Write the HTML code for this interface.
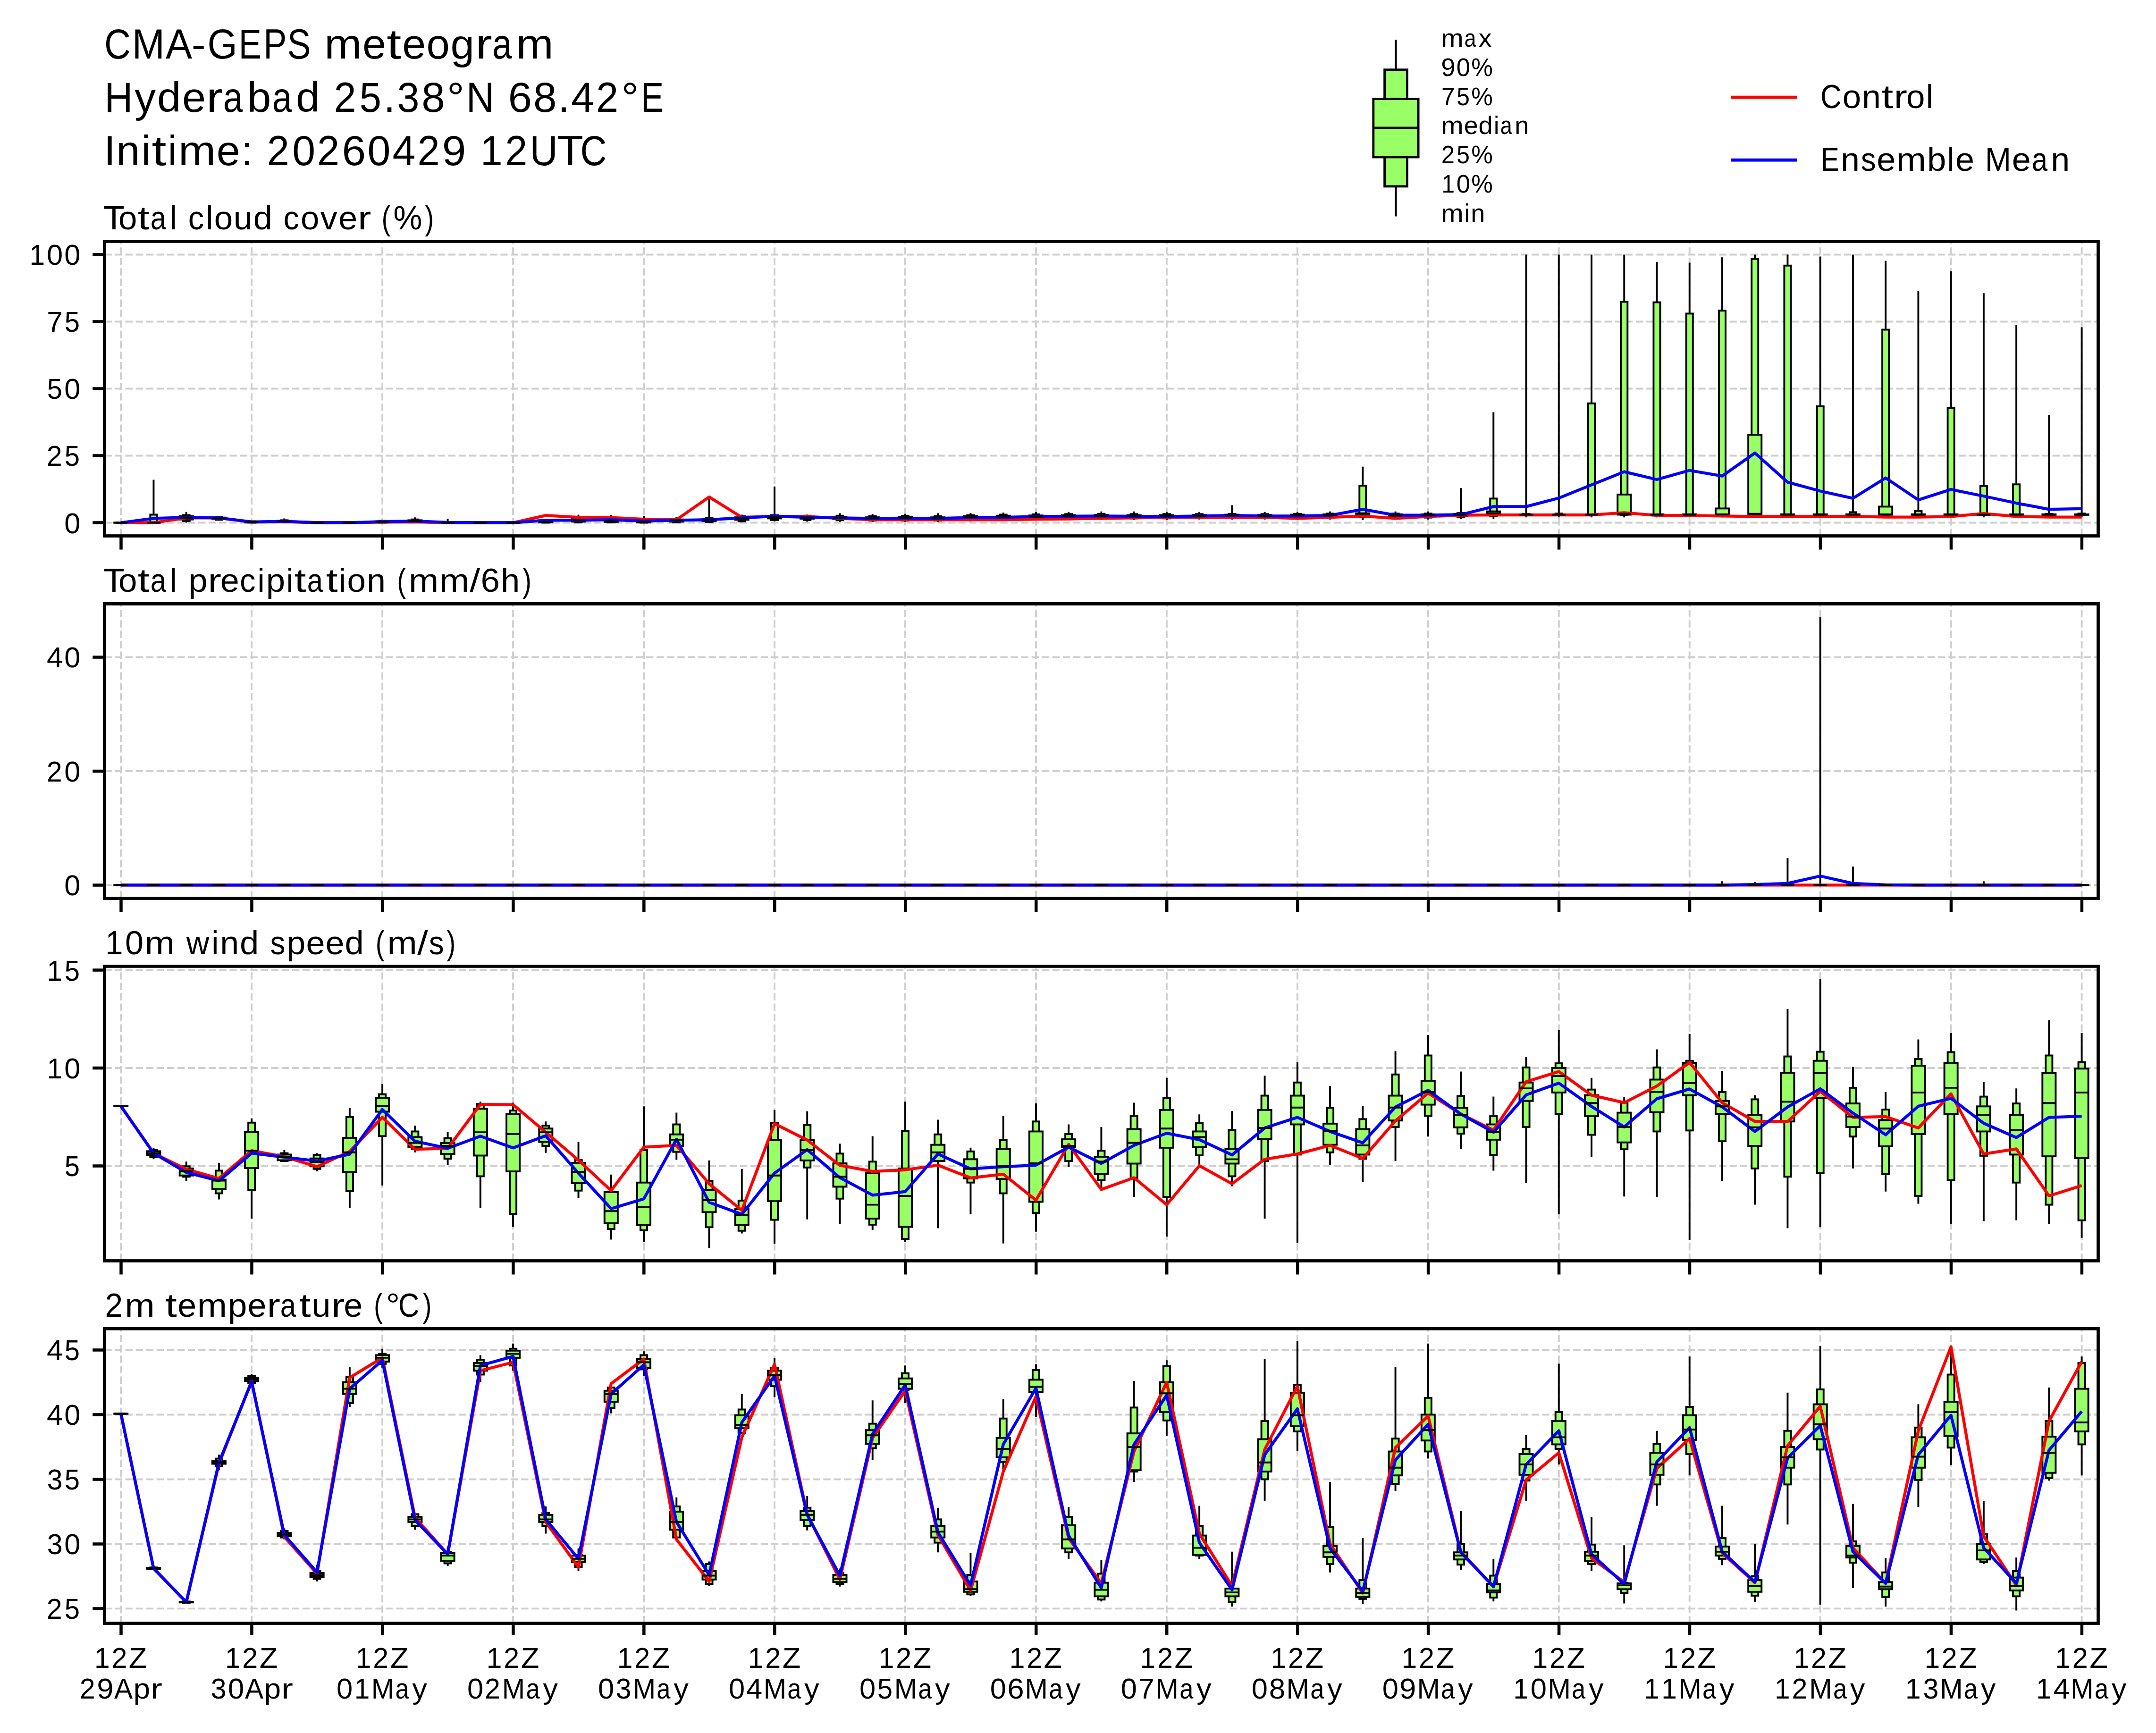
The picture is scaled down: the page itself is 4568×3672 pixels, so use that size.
<!DOCTYPE html>
<html><head><meta charset="utf-8"><title>CMA-GEPS meteogram</title>
<style>html,body{margin:0;padding:0;background:#fff;width:4568px;height:3672px;overflow:hidden}</style>
</head><body>
<svg width="4568" height="3672" viewBox="0 0 4568 3672" style="display:block">
<rect x="0" y="0" width="4568" height="3672" fill="#fff"/>
<g font-family='"Liberation Sans", sans-serif' style="font-kerning:none;font-variant-ligatures:none">
<clipPath id="c_cloud"><rect x="221.45" y="511.4" width="4224.05" height="624.1"/></clipPath>
<g clip-path="url(#c_cloud)"><path d="M256.20 1135.50V511.40M533.16 1135.50V511.40M810.12 1135.50V511.40M1087.08 1135.50V511.40M1364.04 1135.50V511.40M1641.00 1135.50V511.40M1917.96 1135.50V511.40M2194.92 1135.50V511.40M2471.88 1135.50V511.40M2748.84 1135.50V511.40M3025.80 1135.50V511.40M3302.76 1135.50V511.40M3579.72 1135.50V511.40M3856.68 1135.50V511.40M4133.64 1135.50V511.40M4410.60 1135.50V511.40M221.45 1107.50H4445.50M221.45 965.49H4445.50M221.45 823.47H4445.50M221.45 681.46H4445.50M221.45 539.45H4445.50" stroke="#cfcfcf" stroke-width="3.9" stroke-dasharray="15.41 6.66" fill="none"/><path d="M325.44 1107.50V1016.61M394.68 1107.50V1084.78M463.92 1101.82V1093.87M533.16 1107.50V1102.96M602.40 1107.50V1098.41M671.64 1107.50V1106.36M740.88 1107.50V1106.93M810.12 1107.50V1101.82M879.36 1107.50V1096.14M948.60 1107.50V1099.55M1017.84 1107.50V1106.93M1087.08 1107.50V1106.93M1156.32 1107.50V1098.98M1225.56 1107.50V1090.46M1294.80 1107.50V1091.59M1364.04 1107.50V1093.30M1433.28 1107.50V1095.00M1502.52 1107.50V1052.97M1571.76 1106.36V1090.46M1641.00 1104.66V1030.81M1710.24 1105.23V1090.46M1779.48 1105.80V1087.62M1848.72 1106.36V1089.32M1917.96 1105.80V1088.75M1987.20 1106.36V1087.62M2056.44 1104.66V1087.05M2125.68 1104.09V1085.91M2194.92 1102.96V1085.35M2264.16 1101.82V1084.78M2333.40 1101.82V1083.64M2402.64 1101.82V1083.64M2471.88 1101.82V1084.78M2541.12 1100.68V1084.78M2610.36 1100.68V1070.58M2679.60 1100.68V1084.78M2748.84 1100.68V1084.78M2818.08 1100.68V1083.64M2887.32 1101.82V988.78M2956.56 1100.68V1083.64M3025.80 1100.68V1083.64M3095.04 1098.98V1034.22M3164.28 1098.98V873.46M3233.52 1096.14V539.45M3302.76 1096.14V539.45M3372.00 1096.14V539.45M3441.24 1096.14V539.45M3510.48 1096.14V554.79M3579.72 1096.14V556.49M3648.96 1096.14V545.13M3718.20 1096.14V539.45M3787.44 1096.14V539.45M3856.68 1096.14V543.43M3925.92 1096.14V539.45M3995.16 1096.14V552.52M4064.40 1096.14V616.14M4133.64 1096.14V574.67M4202.88 1096.14V621.25M4272.12 1096.14V688.28M4341.36 1096.14V879.71M4410.60 1096.14V693.39" stroke="#000" stroke-width="3.9" fill="none"/><path d="M249.15 1107.50H263.25" stroke="#000" stroke-width="3.9" stroke-linecap="square"/><path d="M242.15 1107.50H270.25" stroke="#000" stroke-width="3.9" stroke-linecap="square"/><rect x="318.39" y="1090.46" width="14.10" height="17.04" fill="#99ff66" stroke="#000" stroke-width="3.9"/><path d="M311.39 1107.50H339.49" stroke="#000" stroke-width="3.9" stroke-linecap="square"/><rect x="387.63" y="1091.59" width="14.10" height="12.50" fill="#99ff66" stroke="#000" stroke-width="3.9"/><rect x="380.63" y="1093.87" width="28.10" height="6.82" fill="#99ff66" stroke="#000" stroke-width="3.9"/><rect x="456.87" y="1095.00" width="14.10" height="6.25" fill="#99ff66" stroke="#000" stroke-width="3.9"/><rect x="449.87" y="1096.71" width="28.10" height="2.84" fill="#99ff66" stroke="#000" stroke-width="3.9"/><rect x="526.11" y="1104.66" width="14.10" height="2.84" fill="#99ff66" stroke="#000" stroke-width="3.9"/><rect x="519.11" y="1105.23" width="28.10" height="1.70" fill="#99ff66" stroke="#000" stroke-width="3.9"/><rect x="595.35" y="1102.39" width="14.10" height="3.98" fill="#99ff66" stroke="#000" stroke-width="3.9"/><rect x="588.35" y="1103.52" width="28.10" height="2.27" fill="#99ff66" stroke="#000" stroke-width="3.9"/><path d="M664.59 1107.22H678.69" stroke="#000" stroke-width="3.9" stroke-linecap="square"/><path d="M657.59 1107.50H685.69" stroke="#000" stroke-width="3.9" stroke-linecap="square"/><path d="M733.83 1107.50H747.93" stroke="#000" stroke-width="3.9" stroke-linecap="square"/><path d="M726.83 1107.50H754.93" stroke="#000" stroke-width="3.9" stroke-linecap="square"/><rect x="803.07" y="1103.52" width="14.10" height="3.98" fill="#99ff66" stroke="#000" stroke-width="3.9"/><rect x="796.07" y="1104.66" width="28.10" height="2.27" fill="#99ff66" stroke="#000" stroke-width="3.9"/><rect x="872.31" y="1100.68" width="14.10" height="5.68" fill="#99ff66" stroke="#000" stroke-width="3.9"/><rect x="865.31" y="1102.39" width="28.10" height="2.84" fill="#99ff66" stroke="#000" stroke-width="3.9"/><rect x="941.55" y="1106.36" width="14.10" height="1.14" fill="#99ff66" stroke="#000" stroke-width="3.9"/><path d="M934.55 1107.22H962.65" stroke="#000" stroke-width="3.9" stroke-linecap="square"/><path d="M1010.79 1107.50H1024.89" stroke="#000" stroke-width="3.9" stroke-linecap="square"/><path d="M1003.79 1107.50H1031.89" stroke="#000" stroke-width="3.9" stroke-linecap="square"/><path d="M1080.03 1107.50H1094.13" stroke="#000" stroke-width="3.9" stroke-linecap="square"/><path d="M1073.03 1107.50H1101.13" stroke="#000" stroke-width="3.9" stroke-linecap="square"/><rect x="1149.27" y="1102.96" width="14.10" height="4.54" fill="#99ff66" stroke="#000" stroke-width="3.9"/><rect x="1142.27" y="1104.09" width="28.10" height="2.84" fill="#99ff66" stroke="#000" stroke-width="3.9"/><rect x="1218.51" y="1097.28" width="14.10" height="9.66" fill="#99ff66" stroke="#000" stroke-width="3.9"/><rect x="1211.51" y="1100.12" width="28.10" height="5.11" fill="#99ff66" stroke="#000" stroke-width="3.9"/><rect x="1287.75" y="1098.98" width="14.10" height="7.95" fill="#99ff66" stroke="#000" stroke-width="3.9"/><rect x="1280.75" y="1101.82" width="28.10" height="3.98" fill="#99ff66" stroke="#000" stroke-width="3.9"/><rect x="1356.99" y="1101.82" width="14.10" height="5.68" fill="#99ff66" stroke="#000" stroke-width="3.9"/><rect x="1349.99" y="1104.09" width="28.10" height="2.84" fill="#99ff66" stroke="#000" stroke-width="3.9"/><rect x="1426.23" y="1098.98" width="14.10" height="7.95" fill="#99ff66" stroke="#000" stroke-width="3.9"/><rect x="1419.23" y="1100.68" width="28.10" height="4.54" fill="#99ff66" stroke="#000" stroke-width="3.9"/><rect x="1495.47" y="1097.28" width="14.10" height="9.09" fill="#99ff66" stroke="#000" stroke-width="3.9"/><rect x="1488.47" y="1098.98" width="28.10" height="5.11" fill="#99ff66" stroke="#000" stroke-width="3.9"/><rect x="1564.71" y="1093.87" width="14.10" height="10.79" fill="#99ff66" stroke="#000" stroke-width="3.9"/><rect x="1557.71" y="1096.14" width="28.10" height="5.11" fill="#99ff66" stroke="#000" stroke-width="3.9"/><rect x="1633.95" y="1091.59" width="14.10" height="10.22" fill="#99ff66" stroke="#000" stroke-width="3.9"/><rect x="1626.95" y="1093.87" width="28.10" height="4.54" fill="#99ff66" stroke="#000" stroke-width="3.9"/><rect x="1703.19" y="1092.73" width="14.10" height="9.09" fill="#99ff66" stroke="#000" stroke-width="3.9"/><rect x="1696.19" y="1094.43" width="28.10" height="4.54" fill="#99ff66" stroke="#000" stroke-width="3.9"/><rect x="1772.43" y="1092.73" width="14.10" height="9.66" fill="#99ff66" stroke="#000" stroke-width="3.9"/><rect x="1765.43" y="1095.00" width="28.10" height="5.11" fill="#99ff66" stroke="#000" stroke-width="3.9"/><rect x="1841.67" y="1093.87" width="14.10" height="9.09" fill="#99ff66" stroke="#000" stroke-width="3.9"/><rect x="1834.67" y="1096.14" width="28.10" height="4.54" fill="#99ff66" stroke="#000" stroke-width="3.9"/><rect x="1910.91" y="1093.30" width="14.10" height="9.66" fill="#99ff66" stroke="#000" stroke-width="3.9"/><rect x="1903.91" y="1095.57" width="28.10" height="4.54" fill="#99ff66" stroke="#000" stroke-width="3.9"/><rect x="1980.15" y="1093.87" width="14.10" height="9.09" fill="#99ff66" stroke="#000" stroke-width="3.9"/><rect x="1973.15" y="1096.14" width="28.10" height="4.54" fill="#99ff66" stroke="#000" stroke-width="3.9"/><rect x="2049.39" y="1091.59" width="14.10" height="9.09" fill="#99ff66" stroke="#000" stroke-width="3.9"/><rect x="2042.39" y="1093.87" width="28.10" height="4.54" fill="#99ff66" stroke="#000" stroke-width="3.9"/><rect x="2118.63" y="1090.46" width="14.10" height="9.66" fill="#99ff66" stroke="#000" stroke-width="3.9"/><rect x="2111.63" y="1092.73" width="28.10" height="4.54" fill="#99ff66" stroke="#000" stroke-width="3.9"/><rect x="2187.87" y="1089.89" width="14.10" height="9.09" fill="#99ff66" stroke="#000" stroke-width="3.9"/><rect x="2180.87" y="1092.16" width="28.10" height="4.54" fill="#99ff66" stroke="#000" stroke-width="3.9"/><rect x="2257.11" y="1089.32" width="14.10" height="9.09" fill="#99ff66" stroke="#000" stroke-width="3.9"/><rect x="2250.11" y="1091.59" width="28.10" height="4.54" fill="#99ff66" stroke="#000" stroke-width="3.9"/><rect x="2326.35" y="1088.75" width="14.10" height="9.66" fill="#99ff66" stroke="#000" stroke-width="3.9"/><rect x="2319.35" y="1091.03" width="28.10" height="4.54" fill="#99ff66" stroke="#000" stroke-width="3.9"/><rect x="2395.59" y="1089.32" width="14.10" height="9.09" fill="#99ff66" stroke="#000" stroke-width="3.9"/><rect x="2388.59" y="1091.59" width="28.10" height="4.54" fill="#99ff66" stroke="#000" stroke-width="3.9"/><rect x="2464.83" y="1089.32" width="14.10" height="9.09" fill="#99ff66" stroke="#000" stroke-width="3.9"/><rect x="2457.83" y="1091.59" width="28.10" height="4.54" fill="#99ff66" stroke="#000" stroke-width="3.9"/><rect x="2534.07" y="1089.32" width="14.10" height="7.95" fill="#99ff66" stroke="#000" stroke-width="3.9"/><rect x="2527.07" y="1091.03" width="28.10" height="4.54" fill="#99ff66" stroke="#000" stroke-width="3.9"/><rect x="2603.31" y="1088.75" width="14.10" height="8.52" fill="#99ff66" stroke="#000" stroke-width="3.9"/><rect x="2596.31" y="1090.46" width="28.10" height="4.54" fill="#99ff66" stroke="#000" stroke-width="3.9"/><rect x="2672.55" y="1089.32" width="14.10" height="7.95" fill="#99ff66" stroke="#000" stroke-width="3.9"/><rect x="2665.55" y="1091.03" width="28.10" height="4.54" fill="#99ff66" stroke="#000" stroke-width="3.9"/><rect x="2741.79" y="1088.75" width="14.10" height="8.52" fill="#99ff66" stroke="#000" stroke-width="3.9"/><rect x="2734.79" y="1090.46" width="28.10" height="4.54" fill="#99ff66" stroke="#000" stroke-width="3.9"/><rect x="2811.03" y="1088.19" width="14.10" height="8.52" fill="#99ff66" stroke="#000" stroke-width="3.9"/><rect x="2804.03" y="1089.89" width="28.10" height="4.54" fill="#99ff66" stroke="#000" stroke-width="3.9"/><rect x="2880.27" y="1029.11" width="14.10" height="67.03" fill="#99ff66" stroke="#000" stroke-width="3.9"/><rect x="2873.27" y="1087.62" width="28.10" height="5.11" fill="#99ff66" stroke="#000" stroke-width="3.9"/><rect x="2949.51" y="1088.19" width="14.10" height="8.52" fill="#99ff66" stroke="#000" stroke-width="3.9"/><rect x="2942.51" y="1089.89" width="28.10" height="4.54" fill="#99ff66" stroke="#000" stroke-width="3.9"/><rect x="3018.75" y="1088.19" width="14.10" height="8.52" fill="#99ff66" stroke="#000" stroke-width="3.9"/><rect x="3011.75" y="1089.89" width="28.10" height="3.98" fill="#99ff66" stroke="#000" stroke-width="3.9"/><rect x="3087.99" y="1087.05" width="14.10" height="9.09" fill="#99ff66" stroke="#000" stroke-width="3.9"/><rect x="3080.99" y="1088.75" width="28.10" height="4.54" fill="#99ff66" stroke="#000" stroke-width="3.9"/><rect x="3157.23" y="1056.38" width="14.10" height="36.92" fill="#99ff66" stroke="#000" stroke-width="3.9"/><rect x="3150.23" y="1083.64" width="28.10" height="6.53" fill="#99ff66" stroke="#000" stroke-width="3.9"/><rect x="3226.47" y="1088.75" width="14.10" height="2.27" fill="#99ff66" stroke="#000" stroke-width="3.9"/><rect x="3219.47" y="1089.89" width="28.10" height="0.85" fill="#99ff66" stroke="#000" stroke-width="3.9"/><rect x="3295.71" y="1088.19" width="14.10" height="2.84" fill="#99ff66" stroke="#000" stroke-width="3.9"/><rect x="3288.71" y="1089.89" width="28.10" height="0.85" fill="#99ff66" stroke="#000" stroke-width="3.9"/><rect x="3364.95" y="854.72" width="14.10" height="236.31" fill="#99ff66" stroke="#000" stroke-width="3.9"/><rect x="3357.95" y="1089.89" width="28.10" height="0.85" fill="#99ff66" stroke="#000" stroke-width="3.9"/><rect x="3434.19" y="639.43" width="14.10" height="451.60" fill="#99ff66" stroke="#000" stroke-width="3.9"/><rect x="3427.19" y="1047.85" width="28.10" height="42.60" fill="#99ff66" stroke="#000" stroke-width="3.9"/><rect x="3503.43" y="640.56" width="14.10" height="450.46" fill="#99ff66" stroke="#000" stroke-width="3.9"/><rect x="3496.43" y="1089.89" width="28.10" height="0.85" fill="#99ff66" stroke="#000" stroke-width="3.9"/><rect x="3572.67" y="664.42" width="14.10" height="426.61" fill="#99ff66" stroke="#000" stroke-width="3.9"/><rect x="3565.67" y="1089.89" width="28.10" height="0.85" fill="#99ff66" stroke="#000" stroke-width="3.9"/><rect x="3641.91" y="658.17" width="14.10" height="432.85" fill="#99ff66" stroke="#000" stroke-width="3.9"/><rect x="3634.91" y="1077.39" width="28.10" height="13.35" fill="#99ff66" stroke="#000" stroke-width="3.9"/><rect x="3711.15" y="548.54" width="14.10" height="542.49" fill="#99ff66" stroke="#000" stroke-width="3.9"/><rect x="3704.15" y="921.18" width="28.10" height="169.28" fill="#99ff66" stroke="#000" stroke-width="3.9"/><rect x="3780.39" y="562.74" width="14.10" height="528.29" fill="#99ff66" stroke="#000" stroke-width="3.9"/><rect x="3773.39" y="1089.89" width="28.10" height="0.85" fill="#99ff66" stroke="#000" stroke-width="3.9"/><rect x="3849.63" y="860.97" width="14.10" height="230.06" fill="#99ff66" stroke="#000" stroke-width="3.9"/><rect x="3842.63" y="1089.89" width="28.10" height="0.85" fill="#99ff66" stroke="#000" stroke-width="3.9"/><rect x="3918.87" y="1085.35" width="14.10" height="5.68" fill="#99ff66" stroke="#000" stroke-width="3.9"/><rect x="3911.87" y="1089.89" width="28.10" height="0.85" fill="#99ff66" stroke="#000" stroke-width="3.9"/><rect x="3988.11" y="698.50" width="14.10" height="392.52" fill="#99ff66" stroke="#000" stroke-width="3.9"/><rect x="3981.11" y="1073.42" width="28.10" height="17.33" fill="#99ff66" stroke="#000" stroke-width="3.9"/><rect x="4057.35" y="1082.51" width="14.10" height="8.52" fill="#99ff66" stroke="#000" stroke-width="3.9"/><rect x="4050.35" y="1089.89" width="28.10" height="0.85" fill="#99ff66" stroke="#000" stroke-width="3.9"/><rect x="4126.59" y="864.94" width="14.10" height="226.08" fill="#99ff66" stroke="#000" stroke-width="3.9"/><rect x="4119.59" y="1089.89" width="28.10" height="0.85" fill="#99ff66" stroke="#000" stroke-width="3.9"/><rect x="4195.83" y="1029.68" width="14.10" height="61.35" fill="#99ff66" stroke="#000" stroke-width="3.9"/><rect x="4188.83" y="1089.89" width="28.10" height="0.85" fill="#99ff66" stroke="#000" stroke-width="3.9"/><rect x="4265.07" y="1026.27" width="14.10" height="64.76" fill="#99ff66" stroke="#000" stroke-width="3.9"/><rect x="4258.07" y="1089.89" width="28.10" height="0.85" fill="#99ff66" stroke="#000" stroke-width="3.9"/><rect x="4334.31" y="1088.75" width="14.10" height="2.27" fill="#99ff66" stroke="#000" stroke-width="3.9"/><rect x="4327.31" y="1089.89" width="28.10" height="0.85" fill="#99ff66" stroke="#000" stroke-width="3.9"/><rect x="4403.55" y="1088.19" width="14.10" height="2.84" fill="#99ff66" stroke="#000" stroke-width="3.9"/><rect x="4396.55" y="1089.89" width="28.10" height="0.85" fill="#99ff66" stroke="#000" stroke-width="3.9"/><polyline points="256.20,1107.50 325.44,1107.50 394.68,1097.28 463.92,1097.28 533.16,1106.36 602.40,1105.23 671.64,1107.50 740.88,1107.50 810.12,1106.36 879.36,1105.80 948.60,1107.50 1017.84,1107.50 1087.08,1107.50 1156.32,1092.16 1225.56,1096.14 1294.80,1096.71 1364.04,1100.12 1433.28,1101.25 1502.52,1052.97 1571.76,1096.14 1641.00,1093.87 1710.24,1094.43 1779.48,1098.41 1848.72,1101.25 1917.96,1101.25 1987.20,1101.25 2056.44,1101.25 2125.68,1101.25 2194.92,1100.12 2264.16,1099.55 2333.40,1098.41 2402.64,1097.28 2471.88,1096.14 2541.12,1096.14 2610.36,1096.14 2679.60,1096.14 2748.84,1098.41 2818.08,1096.14 2887.32,1093.30 2956.56,1098.41 3025.80,1094.43 3095.04,1091.59 3164.28,1091.03 3233.52,1091.03 3302.76,1091.03 3372.00,1091.03 3441.24,1086.48 3510.48,1092.16 3579.72,1092.16 3648.96,1093.30 3718.20,1094.43 3787.44,1094.43 3856.68,1094.43 3925.92,1093.87 3995.16,1095.57 4064.40,1095.57 4133.64,1094.43 4202.88,1088.19 4272.12,1094.43 4341.36,1095.57 4410.60,1095.57" fill="none" stroke="#ff0000" stroke-width="6.3" stroke-linejoin="round" stroke-linecap="butt"/><polyline points="256.20,1107.50 325.44,1098.41 394.68,1096.14 463.92,1097.28 533.16,1105.80 602.40,1104.66 671.64,1107.50 740.88,1107.50 810.12,1105.23 879.36,1104.09 948.60,1106.93 1017.84,1107.50 1087.08,1107.50 1156.32,1102.39 1225.56,1102.39 1294.80,1101.25 1364.04,1104.09 1433.28,1102.39 1502.52,1101.25 1571.76,1097.28 1641.00,1093.87 1710.24,1096.14 1779.48,1097.28 1848.72,1098.41 1917.96,1097.84 1987.20,1098.41 2056.44,1096.71 2125.68,1096.14 2194.92,1094.43 2264.16,1093.87 2333.40,1093.30 2402.64,1093.87 2471.88,1094.43 2541.12,1093.30 2610.36,1092.16 2679.60,1093.30 2748.84,1093.30 2818.08,1092.16 2887.32,1079.10 2956.56,1091.59 3025.80,1091.59 3095.04,1090.46 3164.28,1073.42 3233.52,1073.42 3302.76,1055.24 3372.00,1027.40 3441.24,999.57 3510.48,1016.04 3579.72,996.73 3648.96,1008.66 3718.20,959.81 3787.44,1021.72 3856.68,1040.47 3925.92,1055.81 3995.16,1012.64 4064.40,1059.22 4133.64,1037.06 4202.88,1051.26 4272.12,1066.03 4341.36,1079.10 4410.60,1077.96" fill="none" stroke="#0000ff" stroke-width="6.3" stroke-linejoin="round" stroke-linecap="butt"/><path d="M242.15 1107.50H270.25M311.39 1107.50H339.49M380.63 1096.71H408.73M449.87 1098.41H477.97M519.11 1105.80H547.21M588.35 1104.66H616.45M657.59 1107.50H685.69M726.83 1107.50H754.93M796.07 1105.80H824.17M865.31 1104.09H893.41M934.55 1107.50H962.65M1003.79 1107.50H1031.89M1073.03 1107.50H1101.13M1142.27 1105.80H1170.37M1211.51 1102.39H1239.61M1280.75 1104.09H1308.85M1349.99 1105.80H1378.09M1419.23 1102.39H1447.33M1488.47 1101.25H1516.57M1557.71 1098.41H1585.81M1626.95 1096.14H1655.05M1696.19 1096.71H1724.29M1765.43 1097.28H1793.53M1834.67 1098.41H1862.77M1903.91 1097.84H1932.01M1973.15 1098.41H2001.25M2042.39 1096.14H2070.49M2111.63 1094.43H2139.73M2180.87 1094.43H2208.97M2250.11 1093.30H2278.21M2319.35 1093.30H2347.45M2388.59 1093.87H2416.69M2457.83 1093.87H2485.93M2527.07 1093.30H2555.17M2596.31 1092.16H2624.41M2665.55 1093.30H2693.65M2734.79 1092.16H2762.89M2804.03 1091.59H2832.13M2873.27 1089.32H2901.37M2942.51 1091.59H2970.61M3011.75 1091.59H3039.85M3080.99 1090.46H3109.09M3150.23 1087.62H3178.33M3219.47 1090.46H3247.57M3288.71 1090.46H3316.81M3357.95 1090.46H3386.05M3427.19 1088.75H3455.29M3496.43 1090.46H3524.53M3565.67 1090.46H3593.77M3634.91 1089.89H3663.01M3704.15 1088.75H3732.25M3773.39 1090.46H3801.49M3842.63 1090.46H3870.73M3911.87 1090.46H3939.97M3981.11 1089.89H4009.21M4050.35 1090.46H4078.45M4119.59 1090.46H4147.69M4188.83 1090.46H4216.93M4258.07 1090.46H4286.17M4327.31 1090.46H4355.41M4396.55 1090.46H4424.65" stroke="#000" stroke-width="3.9" fill="none"/></g>
<rect x="221.45" y="511.4" width="4224.05" height="624.10" fill="none" stroke="#000" stroke-width="6.7"/>
<path d="M256.50 1135.50v28.9M533.46 1135.50v28.9M810.42 1135.50v28.9M1087.38 1135.50v28.9M1364.34 1135.50v28.9M1641.30 1135.50v28.9M1918.26 1135.50v28.9M2195.22 1135.50v28.9M2472.18 1135.50v28.9M2749.14 1135.50v28.9M3026.10 1135.50v28.9M3303.06 1135.50v28.9M3580.02 1135.50v28.9M3856.98 1135.50v28.9M4133.94 1135.50v28.9M4410.90 1135.50v28.9M221.45 1107.50h-25.2M221.45 965.49h-25.2M221.45 823.47h-25.2M221.45 681.46h-25.2M221.45 539.45h-25.2" stroke="#000" stroke-width="6.5" fill="none"/>
<text transform="translate(136.13,1129.50) scale(0.995,1)" font-size="61.81">0</text>
<text transform="translate(98.87,987.49) scale(0.959,1)" font-size="61.81">2</text><text transform="translate(136.87,987.49) scale(0.939,1)" font-size="61.81">5</text>
<text transform="translate(99.75,845.47) scale(0.939,1)" font-size="61.81">5</text><text transform="translate(136.13,845.47) scale(0.995,1)" font-size="61.81">0</text>
<text transform="translate(99.28,703.46) scale(0.973,1)" font-size="61.81">7</text><text transform="translate(136.87,703.46) scale(0.939,1)" font-size="61.81">5</text>
<text transform="translate(62.40,561.45) scale(0.950,1)" font-size="61.81">1</text><text transform="translate(99.02,561.45) scale(0.995,1)" font-size="61.81">0</text><text transform="translate(136.13,561.45) scale(0.995,1)" font-size="61.81">0</text>
<text transform="translate(219.17,485.80) scale(1.029,1)" font-size="70.64">T</text><text transform="translate(251.10,485.80) scale(1.003,1)" font-size="70.64">o</text><text transform="translate(291.63,485.80) scale(1.261,1)" font-size="70.64">t</text><text transform="translate(318.78,485.80) scale(0.849,1)" font-size="70.64">a</text><text transform="translate(359.87,485.80) scale(0.965,1)" font-size="70.64">l</text><text transform="translate(398.73,485.80) scale(0.947,1)" font-size="70.64">c</text><text transform="translate(436.24,485.80) scale(0.965,1)" font-size="70.64">l</text><text transform="translate(453.78,485.80) scale(1.003,1)" font-size="70.64">o</text><text transform="translate(494.86,485.80) scale(1.018,1)" font-size="70.64">u</text><text transform="translate(536.76,485.80) scale(1.026,1)" font-size="70.64">d</text><text transform="translate(600.47,485.80) scale(0.947,1)" font-size="70.64">c</text><text transform="translate(636.99,485.80) scale(1.003,1)" font-size="70.64">o</text><text transform="translate(678.82,485.80) scale(1.019,1)" font-size="70.64">v</text><text transform="translate(717.15,485.80) scale(1.019,1)" font-size="70.64">e</text><text transform="translate(757.93,485.80) scale(1.209,1)" font-size="70.64">r</text><text transform="translate(808.39,485.80) scale(0.798,1)" font-size="70.64">(</text><text transform="translate(833.40,485.80) scale(0.969,1)" font-size="70.64">%</text><text transform="translate(900.52,485.80) scale(0.798,1)" font-size="70.64">)</text>
<clipPath id="c_precip"><rect x="221.45" y="1279.4" width="4224.05" height="624.0999999999999"/></clipPath>
<g clip-path="url(#c_precip)"><path d="M256.20 1903.50V1279.40M533.16 1903.50V1279.40M810.12 1903.50V1279.40M1087.08 1903.50V1279.40M1364.04 1903.50V1279.40M1641.00 1903.50V1279.40M1917.96 1903.50V1279.40M2194.92 1903.50V1279.40M2471.88 1903.50V1279.40M2748.84 1903.50V1279.40M3025.80 1903.50V1279.40M3302.76 1903.50V1279.40M3579.72 1903.50V1279.40M3856.68 1903.50V1279.40M4133.64 1903.50V1279.40M4410.60 1903.50V1279.40M221.45 1875.45H4445.50M221.45 1633.92H4445.50M221.45 1392.39H4445.50" stroke="#cfcfcf" stroke-width="3.9" stroke-dasharray="15.41 6.66" fill="none"/><path d="M3648.96 1875.45V1867.36M3718.20 1875.45V1868.81M3787.44 1875.45V1818.33M3856.68 1875.45V1307.85M3925.92 1875.45V1836.20M4202.88 1875.45V1867.36" stroke="#000" stroke-width="3.9" fill="none"/><path d="M249.15 1875.45H263.25" stroke="#000" stroke-width="3.9" stroke-linecap="square"/><path d="M242.15 1875.45H270.25" stroke="#000" stroke-width="3.9" stroke-linecap="square"/><path d="M318.39 1875.45H332.49" stroke="#000" stroke-width="3.9" stroke-linecap="square"/><path d="M311.39 1875.45H339.49" stroke="#000" stroke-width="3.9" stroke-linecap="square"/><path d="M387.63 1875.45H401.73" stroke="#000" stroke-width="3.9" stroke-linecap="square"/><path d="M380.63 1875.45H408.73" stroke="#000" stroke-width="3.9" stroke-linecap="square"/><path d="M456.87 1875.45H470.97" stroke="#000" stroke-width="3.9" stroke-linecap="square"/><path d="M449.87 1875.45H477.97" stroke="#000" stroke-width="3.9" stroke-linecap="square"/><path d="M526.11 1875.45H540.21" stroke="#000" stroke-width="3.9" stroke-linecap="square"/><path d="M519.11 1875.45H547.21" stroke="#000" stroke-width="3.9" stroke-linecap="square"/><path d="M595.35 1875.45H609.45" stroke="#000" stroke-width="3.9" stroke-linecap="square"/><path d="M588.35 1875.45H616.45" stroke="#000" stroke-width="3.9" stroke-linecap="square"/><path d="M664.59 1875.45H678.69" stroke="#000" stroke-width="3.9" stroke-linecap="square"/><path d="M657.59 1875.45H685.69" stroke="#000" stroke-width="3.9" stroke-linecap="square"/><path d="M733.83 1875.45H747.93" stroke="#000" stroke-width="3.9" stroke-linecap="square"/><path d="M726.83 1875.45H754.93" stroke="#000" stroke-width="3.9" stroke-linecap="square"/><path d="M803.07 1875.45H817.17" stroke="#000" stroke-width="3.9" stroke-linecap="square"/><path d="M796.07 1875.45H824.17" stroke="#000" stroke-width="3.9" stroke-linecap="square"/><path d="M872.31 1875.45H886.41" stroke="#000" stroke-width="3.9" stroke-linecap="square"/><path d="M865.31 1875.45H893.41" stroke="#000" stroke-width="3.9" stroke-linecap="square"/><path d="M941.55 1875.45H955.65" stroke="#000" stroke-width="3.9" stroke-linecap="square"/><path d="M934.55 1875.45H962.65" stroke="#000" stroke-width="3.9" stroke-linecap="square"/><path d="M1010.79 1875.45H1024.89" stroke="#000" stroke-width="3.9" stroke-linecap="square"/><path d="M1003.79 1875.45H1031.89" stroke="#000" stroke-width="3.9" stroke-linecap="square"/><path d="M1080.03 1875.45H1094.13" stroke="#000" stroke-width="3.9" stroke-linecap="square"/><path d="M1073.03 1875.45H1101.13" stroke="#000" stroke-width="3.9" stroke-linecap="square"/><path d="M1149.27 1875.45H1163.37" stroke="#000" stroke-width="3.9" stroke-linecap="square"/><path d="M1142.27 1875.45H1170.37" stroke="#000" stroke-width="3.9" stroke-linecap="square"/><path d="M1218.51 1875.45H1232.61" stroke="#000" stroke-width="3.9" stroke-linecap="square"/><path d="M1211.51 1875.45H1239.61" stroke="#000" stroke-width="3.9" stroke-linecap="square"/><path d="M1287.75 1875.45H1301.85" stroke="#000" stroke-width="3.9" stroke-linecap="square"/><path d="M1280.75 1875.45H1308.85" stroke="#000" stroke-width="3.9" stroke-linecap="square"/><path d="M1356.99 1875.45H1371.09" stroke="#000" stroke-width="3.9" stroke-linecap="square"/><path d="M1349.99 1875.45H1378.09" stroke="#000" stroke-width="3.9" stroke-linecap="square"/><path d="M1426.23 1875.45H1440.33" stroke="#000" stroke-width="3.9" stroke-linecap="square"/><path d="M1419.23 1875.45H1447.33" stroke="#000" stroke-width="3.9" stroke-linecap="square"/><path d="M1495.47 1875.45H1509.57" stroke="#000" stroke-width="3.9" stroke-linecap="square"/><path d="M1488.47 1875.45H1516.57" stroke="#000" stroke-width="3.9" stroke-linecap="square"/><path d="M1564.71 1875.45H1578.81" stroke="#000" stroke-width="3.9" stroke-linecap="square"/><path d="M1557.71 1875.45H1585.81" stroke="#000" stroke-width="3.9" stroke-linecap="square"/><path d="M1633.95 1875.45H1648.05" stroke="#000" stroke-width="3.9" stroke-linecap="square"/><path d="M1626.95 1875.45H1655.05" stroke="#000" stroke-width="3.9" stroke-linecap="square"/><path d="M1703.19 1875.45H1717.29" stroke="#000" stroke-width="3.9" stroke-linecap="square"/><path d="M1696.19 1875.45H1724.29" stroke="#000" stroke-width="3.9" stroke-linecap="square"/><path d="M1772.43 1875.45H1786.53" stroke="#000" stroke-width="3.9" stroke-linecap="square"/><path d="M1765.43 1875.45H1793.53" stroke="#000" stroke-width="3.9" stroke-linecap="square"/><path d="M1841.67 1875.45H1855.77" stroke="#000" stroke-width="3.9" stroke-linecap="square"/><path d="M1834.67 1875.45H1862.77" stroke="#000" stroke-width="3.9" stroke-linecap="square"/><path d="M1910.91 1875.45H1925.01" stroke="#000" stroke-width="3.9" stroke-linecap="square"/><path d="M1903.91 1875.45H1932.01" stroke="#000" stroke-width="3.9" stroke-linecap="square"/><path d="M1980.15 1875.45H1994.25" stroke="#000" stroke-width="3.9" stroke-linecap="square"/><path d="M1973.15 1875.45H2001.25" stroke="#000" stroke-width="3.9" stroke-linecap="square"/><path d="M2049.39 1875.45H2063.49" stroke="#000" stroke-width="3.9" stroke-linecap="square"/><path d="M2042.39 1875.45H2070.49" stroke="#000" stroke-width="3.9" stroke-linecap="square"/><path d="M2118.63 1875.45H2132.73" stroke="#000" stroke-width="3.9" stroke-linecap="square"/><path d="M2111.63 1875.45H2139.73" stroke="#000" stroke-width="3.9" stroke-linecap="square"/><path d="M2187.87 1875.45H2201.97" stroke="#000" stroke-width="3.9" stroke-linecap="square"/><path d="M2180.87 1875.45H2208.97" stroke="#000" stroke-width="3.9" stroke-linecap="square"/><path d="M2257.11 1875.45H2271.21" stroke="#000" stroke-width="3.9" stroke-linecap="square"/><path d="M2250.11 1875.45H2278.21" stroke="#000" stroke-width="3.9" stroke-linecap="square"/><path d="M2326.35 1875.45H2340.45" stroke="#000" stroke-width="3.9" stroke-linecap="square"/><path d="M2319.35 1875.45H2347.45" stroke="#000" stroke-width="3.9" stroke-linecap="square"/><path d="M2395.59 1875.45H2409.69" stroke="#000" stroke-width="3.9" stroke-linecap="square"/><path d="M2388.59 1875.45H2416.69" stroke="#000" stroke-width="3.9" stroke-linecap="square"/><path d="M2464.83 1875.45H2478.93" stroke="#000" stroke-width="3.9" stroke-linecap="square"/><path d="M2457.83 1875.45H2485.93" stroke="#000" stroke-width="3.9" stroke-linecap="square"/><path d="M2534.07 1875.45H2548.17" stroke="#000" stroke-width="3.9" stroke-linecap="square"/><path d="M2527.07 1875.45H2555.17" stroke="#000" stroke-width="3.9" stroke-linecap="square"/><path d="M2603.31 1875.45H2617.41" stroke="#000" stroke-width="3.9" stroke-linecap="square"/><path d="M2596.31 1875.45H2624.41" stroke="#000" stroke-width="3.9" stroke-linecap="square"/><path d="M2672.55 1875.45H2686.65" stroke="#000" stroke-width="3.9" stroke-linecap="square"/><path d="M2665.55 1875.45H2693.65" stroke="#000" stroke-width="3.9" stroke-linecap="square"/><path d="M2741.79 1875.45H2755.89" stroke="#000" stroke-width="3.9" stroke-linecap="square"/><path d="M2734.79 1875.45H2762.89" stroke="#000" stroke-width="3.9" stroke-linecap="square"/><path d="M2811.03 1875.45H2825.13" stroke="#000" stroke-width="3.9" stroke-linecap="square"/><path d="M2804.03 1875.45H2832.13" stroke="#000" stroke-width="3.9" stroke-linecap="square"/><path d="M2880.27 1875.45H2894.37" stroke="#000" stroke-width="3.9" stroke-linecap="square"/><path d="M2873.27 1875.45H2901.37" stroke="#000" stroke-width="3.9" stroke-linecap="square"/><path d="M2949.51 1875.45H2963.61" stroke="#000" stroke-width="3.9" stroke-linecap="square"/><path d="M2942.51 1875.45H2970.61" stroke="#000" stroke-width="3.9" stroke-linecap="square"/><path d="M3018.75 1875.45H3032.85" stroke="#000" stroke-width="3.9" stroke-linecap="square"/><path d="M3011.75 1875.45H3039.85" stroke="#000" stroke-width="3.9" stroke-linecap="square"/><path d="M3087.99 1875.45H3102.09" stroke="#000" stroke-width="3.9" stroke-linecap="square"/><path d="M3080.99 1875.45H3109.09" stroke="#000" stroke-width="3.9" stroke-linecap="square"/><path d="M3157.23 1875.45H3171.33" stroke="#000" stroke-width="3.9" stroke-linecap="square"/><path d="M3150.23 1875.45H3178.33" stroke="#000" stroke-width="3.9" stroke-linecap="square"/><path d="M3226.47 1875.45H3240.57" stroke="#000" stroke-width="3.9" stroke-linecap="square"/><path d="M3219.47 1875.45H3247.57" stroke="#000" stroke-width="3.9" stroke-linecap="square"/><path d="M3295.71 1875.45H3309.81" stroke="#000" stroke-width="3.9" stroke-linecap="square"/><path d="M3288.71 1875.45H3316.81" stroke="#000" stroke-width="3.9" stroke-linecap="square"/><path d="M3364.95 1875.45H3379.05" stroke="#000" stroke-width="3.9" stroke-linecap="square"/><path d="M3357.95 1875.45H3386.05" stroke="#000" stroke-width="3.9" stroke-linecap="square"/><path d="M3434.19 1875.45H3448.29" stroke="#000" stroke-width="3.9" stroke-linecap="square"/><path d="M3427.19 1875.45H3455.29" stroke="#000" stroke-width="3.9" stroke-linecap="square"/><path d="M3503.43 1875.45H3517.53" stroke="#000" stroke-width="3.9" stroke-linecap="square"/><path d="M3496.43 1875.45H3524.53" stroke="#000" stroke-width="3.9" stroke-linecap="square"/><path d="M3572.67 1875.45H3586.77" stroke="#000" stroke-width="3.9" stroke-linecap="square"/><path d="M3565.67 1875.45H3593.77" stroke="#000" stroke-width="3.9" stroke-linecap="square"/><path d="M3641.91 1875.45H3656.01" stroke="#000" stroke-width="3.9" stroke-linecap="square"/><path d="M3634.91 1875.45H3663.01" stroke="#000" stroke-width="3.9" stroke-linecap="square"/><path d="M3711.15 1875.45H3725.25" stroke="#000" stroke-width="3.9" stroke-linecap="square"/><path d="M3704.15 1875.45H3732.25" stroke="#000" stroke-width="3.9" stroke-linecap="square"/><path d="M3780.39 1875.45H3794.49" stroke="#000" stroke-width="3.9" stroke-linecap="square"/><path d="M3773.39 1875.45H3801.49" stroke="#000" stroke-width="3.9" stroke-linecap="square"/><path d="M3849.63 1875.45H3863.73" stroke="#000" stroke-width="3.9" stroke-linecap="square"/><path d="M3842.63 1875.45H3870.73" stroke="#000" stroke-width="3.9" stroke-linecap="square"/><path d="M3918.87 1875.45H3932.97" stroke="#000" stroke-width="3.9" stroke-linecap="square"/><path d="M3911.87 1875.45H3939.97" stroke="#000" stroke-width="3.9" stroke-linecap="square"/><path d="M3988.11 1875.45H4002.21" stroke="#000" stroke-width="3.9" stroke-linecap="square"/><path d="M3981.11 1875.45H4009.21" stroke="#000" stroke-width="3.9" stroke-linecap="square"/><path d="M4057.35 1875.45H4071.45" stroke="#000" stroke-width="3.9" stroke-linecap="square"/><path d="M4050.35 1875.45H4078.45" stroke="#000" stroke-width="3.9" stroke-linecap="square"/><path d="M4126.59 1875.45H4140.69" stroke="#000" stroke-width="3.9" stroke-linecap="square"/><path d="M4119.59 1875.45H4147.69" stroke="#000" stroke-width="3.9" stroke-linecap="square"/><path d="M4195.83 1875.45H4209.93" stroke="#000" stroke-width="3.9" stroke-linecap="square"/><path d="M4188.83 1875.45H4216.93" stroke="#000" stroke-width="3.9" stroke-linecap="square"/><path d="M4265.07 1875.45H4279.17" stroke="#000" stroke-width="3.9" stroke-linecap="square"/><path d="M4258.07 1875.45H4286.17" stroke="#000" stroke-width="3.9" stroke-linecap="square"/><path d="M4334.31 1875.45H4348.41" stroke="#000" stroke-width="3.9" stroke-linecap="square"/><path d="M4327.31 1875.45H4355.41" stroke="#000" stroke-width="3.9" stroke-linecap="square"/><path d="M4403.55 1875.45H4417.65" stroke="#000" stroke-width="3.9" stroke-linecap="square"/><path d="M4396.55 1875.45H4424.65" stroke="#000" stroke-width="3.9" stroke-linecap="square"/><polyline points="256.20,1875.45 325.44,1875.45 394.68,1875.45 463.92,1875.45 533.16,1875.45 602.40,1875.45 671.64,1875.45 740.88,1875.45 810.12,1875.45 879.36,1875.45 948.60,1875.45 1017.84,1875.45 1087.08,1875.45 1156.32,1875.45 1225.56,1875.45 1294.80,1875.45 1364.04,1875.45 1433.28,1875.45 1502.52,1875.45 1571.76,1875.45 1641.00,1875.45 1710.24,1875.45 1779.48,1875.45 1848.72,1875.45 1917.96,1875.45 1987.20,1875.45 2056.44,1875.45 2125.68,1875.45 2194.92,1875.45 2264.16,1875.45 2333.40,1875.45 2402.64,1875.45 2471.88,1875.45 2541.12,1875.45 2610.36,1875.45 2679.60,1875.45 2748.84,1875.45 2818.08,1875.45 2887.32,1875.45 2956.56,1875.45 3025.80,1875.45 3095.04,1875.45 3164.28,1875.45 3233.52,1875.45 3302.76,1875.45 3372.00,1875.45 3441.24,1875.45 3510.48,1875.45 3579.72,1875.45 3648.96,1875.45 3718.20,1875.45 3787.44,1875.45 3856.68,1875.45 3925.92,1875.45 3995.16,1875.45 4064.40,1875.45 4133.64,1875.45 4202.88,1875.45 4272.12,1875.45 4341.36,1875.45 4410.60,1875.45" fill="none" stroke="#ff0000" stroke-width="6.3" stroke-linejoin="round" stroke-linecap="butt"/><polyline points="256.20,1875.45 325.44,1875.45 394.68,1875.45 463.92,1875.45 533.16,1875.45 602.40,1875.45 671.64,1875.45 740.88,1875.45 810.12,1875.45 879.36,1875.45 948.60,1875.45 1017.84,1875.45 1087.08,1875.45 1156.32,1875.45 1225.56,1875.45 1294.80,1875.45 1364.04,1875.45 1433.28,1875.45 1502.52,1875.45 1571.76,1875.45 1641.00,1875.45 1710.24,1875.45 1779.48,1875.45 1848.72,1875.45 1917.96,1875.45 1987.20,1875.45 2056.44,1875.45 2125.68,1875.45 2194.92,1875.45 2264.16,1875.45 2333.40,1875.45 2402.64,1875.45 2471.88,1875.45 2541.12,1875.45 2610.36,1875.45 2679.60,1875.45 2748.84,1875.45 2818.08,1875.45 2887.32,1875.45 2956.56,1875.45 3025.80,1875.45 3095.04,1875.45 3164.28,1875.45 3233.52,1875.45 3302.76,1875.45 3372.00,1875.45 3441.24,1875.45 3510.48,1875.45 3579.72,1875.45 3648.96,1875.45 3718.20,1874.24 3787.44,1871.83 3856.68,1856.25 3925.92,1871.83 3995.16,1874.85 4064.40,1875.45 4133.64,1875.45 4202.88,1875.45 4272.12,1875.45 4341.36,1875.45 4410.60,1875.45" fill="none" stroke="#0000ff" stroke-width="6.3" stroke-linejoin="round" stroke-linecap="butt"/><path d="M242.15 1875.45H270.25M311.39 1875.45H339.49M380.63 1875.45H408.73M449.87 1875.45H477.97M519.11 1875.45H547.21M588.35 1875.45H616.45M657.59 1875.45H685.69M726.83 1875.45H754.93M796.07 1875.45H824.17M865.31 1875.45H893.41M934.55 1875.45H962.65M1003.79 1875.45H1031.89M1073.03 1875.45H1101.13M1142.27 1875.45H1170.37M1211.51 1875.45H1239.61M1280.75 1875.45H1308.85M1349.99 1875.45H1378.09M1419.23 1875.45H1447.33M1488.47 1875.45H1516.57M1557.71 1875.45H1585.81M1626.95 1875.45H1655.05M1696.19 1875.45H1724.29M1765.43 1875.45H1793.53M1834.67 1875.45H1862.77M1903.91 1875.45H1932.01M1973.15 1875.45H2001.25M2042.39 1875.45H2070.49M2111.63 1875.45H2139.73M2180.87 1875.45H2208.97M2250.11 1875.45H2278.21M2319.35 1875.45H2347.45M2388.59 1875.45H2416.69M2457.83 1875.45H2485.93M2527.07 1875.45H2555.17M2596.31 1875.45H2624.41M2665.55 1875.45H2693.65M2734.79 1875.45H2762.89M2804.03 1875.45H2832.13M2873.27 1875.45H2901.37M2942.51 1875.45H2970.61M3011.75 1875.45H3039.85M3080.99 1875.45H3109.09M3150.23 1875.45H3178.33M3219.47 1875.45H3247.57M3288.71 1875.45H3316.81M3357.95 1875.45H3386.05M3427.19 1875.45H3455.29M3496.43 1875.45H3524.53M3565.67 1875.45H3593.77M3634.91 1875.45H3663.01M3704.15 1875.45H3732.25M3773.39 1875.45H3801.49M3842.63 1875.45H3870.73M3911.87 1875.45H3939.97M3981.11 1875.45H4009.21M4050.35 1875.45H4078.45M4119.59 1875.45H4147.69M4188.83 1875.45H4216.93M4258.07 1875.45H4286.17M4327.31 1875.45H4355.41M4396.55 1875.45H4424.65" stroke="#000" stroke-width="3.9" fill="none"/></g>
<rect x="221.45" y="1279.4" width="4224.05" height="624.10" fill="none" stroke="#000" stroke-width="6.7"/>
<path d="M256.50 1903.50v28.9M533.46 1903.50v28.9M810.42 1903.50v28.9M1087.38 1903.50v28.9M1364.34 1903.50v28.9M1641.30 1903.50v28.9M1918.26 1903.50v28.9M2195.22 1903.50v28.9M2472.18 1903.50v28.9M2749.14 1903.50v28.9M3026.10 1903.50v28.9M3303.06 1903.50v28.9M3580.02 1903.50v28.9M3856.98 1903.50v28.9M4133.94 1903.50v28.9M4410.90 1903.50v28.9M221.45 1875.45h-25.2M221.45 1633.92h-25.2M221.45 1392.39h-25.2" stroke="#000" stroke-width="6.5" fill="none"/>
<text transform="translate(136.13,1897.45) scale(0.995,1)" font-size="61.81">0</text>
<text transform="translate(98.87,1655.92) scale(0.959,1)" font-size="61.81">2</text><text transform="translate(136.13,1655.92) scale(0.995,1)" font-size="61.81">0</text>
<text transform="translate(99.01,1414.39) scale(0.995,1)" font-size="61.81">4</text><text transform="translate(136.13,1414.39) scale(0.995,1)" font-size="61.81">0</text>
<text transform="translate(219.17,1253.90) scale(1.029,1)" font-size="70.64">T</text><text transform="translate(251.10,1253.90) scale(1.003,1)" font-size="70.64">o</text><text transform="translate(291.63,1253.90) scale(1.261,1)" font-size="70.64">t</text><text transform="translate(318.78,1253.90) scale(0.849,1)" font-size="70.64">a</text><text transform="translate(359.87,1253.90) scale(0.965,1)" font-size="70.64">l</text><text transform="translate(399.28,1253.90) scale(1.027,1)" font-size="70.64">p</text><text transform="translate(440.60,1253.90) scale(1.209,1)" font-size="70.64">r</text><text transform="translate(466.78,1253.90) scale(1.019,1)" font-size="70.64">e</text><text transform="translate(508.02,1253.90) scale(0.947,1)" font-size="70.64">c</text><text transform="translate(545.56,1253.90) scale(0.965,1)" font-size="70.64">i</text><text transform="translate(563.74,1253.90) scale(1.027,1)" font-size="70.64">p</text><text transform="translate(606.40,1253.90) scale(0.965,1)" font-size="70.64">i</text><text transform="translate(623.64,1253.90) scale(1.261,1)" font-size="70.64">t</text><text transform="translate(650.80,1253.90) scale(0.849,1)" font-size="70.64">a</text><text transform="translate(690.64,1253.90) scale(1.261,1)" font-size="70.64">t</text><text transform="translate(718.06,1253.90) scale(0.965,1)" font-size="70.64">i</text><text transform="translate(735.56,1253.90) scale(1.003,1)" font-size="70.64">o</text><text transform="translate(776.93,1253.90) scale(1.018,1)" font-size="70.64">n</text><text transform="translate(841.33,1253.90) scale(0.798,1)" font-size="70.64">(</text><text transform="translate(866.12,1253.90) scale(1.075,1)" font-size="70.64">m</text><text transform="translate(931.06,1253.90) scale(1.075,1)" font-size="70.64">m</text><text transform="translate(995.00,1253.90) scale(1.144,1)" font-size="70.64">/</text><text transform="translate(1018.42,1253.90) scale(1.030,1)" font-size="70.64">6</text><text transform="translate(1060.91,1253.90) scale(1.025,1)" font-size="70.64">h</text><text transform="translate(1107.14,1253.90) scale(0.798,1)" font-size="70.64">)</text>
<clipPath id="c_wind"><rect x="221.45" y="2047.4" width="4224.05" height="624.0999999999999"/></clipPath>
<g clip-path="url(#c_wind)"><path d="M256.20 2671.50V2047.40M533.16 2671.50V2047.40M810.12 2671.50V2047.40M1087.08 2671.50V2047.40M1364.04 2671.50V2047.40M1641.00 2671.50V2047.40M1917.96 2671.50V2047.40M2194.92 2671.50V2047.40M2471.88 2671.50V2047.40M2748.84 2671.50V2047.40M3025.80 2671.50V2047.40M3302.76 2671.50V2047.40M3579.72 2671.50V2047.40M3856.68 2671.50V2047.40M4133.64 2671.50V2047.40M4410.60 2671.50V2047.40M221.45 2470.45H4445.50M221.45 2263.00H4445.50M221.45 2055.55H4445.50" stroke="#cfcfcf" stroke-width="3.9" stroke-dasharray="15.41 6.66" fill="none"/><path d="M325.44 2456.34V2432.28M394.68 2501.98V2461.32M463.92 2541.40V2463.81M533.16 2582.06V2369.63M602.40 2462.15V2436.84M671.64 2482.07V2443.48M740.88 2559.65V2348.05M810.12 2511.94V2296.61M879.36 2441.82V2384.98M948.60 2468.79V2398.26M1017.84 2559.65V2334.36M1087.08 2599.48V2336.44M1156.32 2442.65V2376.27M1225.56 2538.91V2419.42M1294.80 2626.45V2488.71M1364.04 2631.85V2344.32M1433.28 2457.59V2357.60M1502.52 2644.71V2458.83M1571.76 2613.59V2476.67M1641.00 2635.58V2351.79M1710.24 2583.72V2354.69M1779.48 2593.26V2423.15M1848.72 2606.12V2407.39M1917.96 2631.85V2334.36M1987.20 2602.39V2372.53M2056.44 2572.93V2431.86M2125.68 2634.75V2364.24M2194.92 2609.86V2338.10M2264.16 2472.94V2382.49M2333.40 2522.73V2387.88M2402.64 2536.00V2336.44M2471.88 2620.23V2283.74M2541.12 2470.04V2361.33M2610.36 2513.60V2354.28M2679.60 2582.06V2279.18M2748.84 2633.92V2250.55M2818.08 2468.79V2301.17M2887.32 2504.47V2343.91M2956.56 2460.08V2227.32M3025.80 2408.22V2192.88M3095.04 2434.35V2270.47M3164.28 2480.41V2323.58M3233.52 2506.96V2239.35M3302.76 2572.93V2182.92M3372.00 2450.95V2283.74M3441.24 2535.17V2324.41M3510.48 2536.00V2223.58M3579.72 2628.11V2190.39M3648.96 2502.40V2269.22M3718.20 2552.60V2320.67M3787.44 2602.39V2137.70M3856.68 2600.31V2074.22M3925.92 2475.84V2260.51M3995.16 2524.80V2313.62M4064.40 2550.53V2202.42M4133.64 2593.26V2187.90M4202.88 2587.45V2292.87M4272.12 2585.79V2306.15M4341.36 2593.26V2161.76M4410.60 2622.72V2188.73" stroke="#000" stroke-width="3.9" fill="none"/><path d="M249.15 2343.91H263.25" stroke="#000" stroke-width="3.9" stroke-linecap="square"/><path d="M242.15 2343.91H270.25" stroke="#000" stroke-width="3.9" stroke-linecap="square"/><rect x="318.39" y="2436.43" width="14.10" height="15.35" fill="#99ff66" stroke="#000" stroke-width="3.9"/><rect x="311.39" y="2439.33" width="28.10" height="8.30" fill="#99ff66" stroke="#000" stroke-width="3.9"/><rect x="387.63" y="2471.28" width="14.10" height="21.99" fill="#99ff66" stroke="#000" stroke-width="3.9"/><rect x="380.63" y="2475.84" width="28.10" height="14.94" fill="#99ff66" stroke="#000" stroke-width="3.9"/><rect x="456.87" y="2480.41" width="14.10" height="48.13" fill="#99ff66" stroke="#000" stroke-width="3.9"/><rect x="449.87" y="2499.49" width="28.10" height="19.92" fill="#99ff66" stroke="#000" stroke-width="3.9"/><rect x="526.11" y="2378.76" width="14.10" height="142.31" fill="#99ff66" stroke="#000" stroke-width="3.9"/><rect x="519.11" y="2398.26" width="28.10" height="76.76" fill="#99ff66" stroke="#000" stroke-width="3.9"/><rect x="595.35" y="2443.48" width="14.10" height="16.60" fill="#99ff66" stroke="#000" stroke-width="3.9"/><rect x="588.35" y="2446.39" width="28.10" height="12.03" fill="#99ff66" stroke="#000" stroke-width="3.9"/><rect x="664.59" y="2447.22" width="14.10" height="29.46" fill="#99ff66" stroke="#000" stroke-width="3.9"/><rect x="657.59" y="2454.68" width="28.10" height="16.60" fill="#99ff66" stroke="#000" stroke-width="3.9"/><rect x="733.83" y="2366.72" width="14.10" height="157.25" fill="#99ff66" stroke="#000" stroke-width="3.9"/><rect x="726.83" y="2411.12" width="28.10" height="72.19" fill="#99ff66" stroke="#000" stroke-width="3.9"/><rect x="803.07" y="2318.60" width="14.10" height="88.79" fill="#99ff66" stroke="#000" stroke-width="3.9"/><rect x="796.07" y="2326.06" width="28.10" height="29.46" fill="#99ff66" stroke="#000" stroke-width="3.9"/><rect x="872.31" y="2397.43" width="14.10" height="36.93" fill="#99ff66" stroke="#000" stroke-width="3.9"/><rect x="865.31" y="2409.46" width="28.10" height="21.16" fill="#99ff66" stroke="#000" stroke-width="3.9"/><rect x="941.55" y="2411.53" width="14.10" height="43.56" fill="#99ff66" stroke="#000" stroke-width="3.9"/><rect x="934.55" y="2421.91" width="28.10" height="23.23" fill="#99ff66" stroke="#000" stroke-width="3.9"/><rect x="1010.79" y="2339.34" width="14.10" height="153.10" fill="#99ff66" stroke="#000" stroke-width="3.9"/><rect x="1003.79" y="2349.30" width="28.10" height="99.16" fill="#99ff66" stroke="#000" stroke-width="3.9"/><rect x="1080.03" y="2353.03" width="14.10" height="219.07" fill="#99ff66" stroke="#000" stroke-width="3.9"/><rect x="1073.03" y="2360.92" width="28.10" height="121.15" fill="#99ff66" stroke="#000" stroke-width="3.9"/><rect x="1149.27" y="2384.98" width="14.10" height="43.15" fill="#99ff66" stroke="#000" stroke-width="3.9"/><rect x="1142.27" y="2391.20" width="28.10" height="28.21" fill="#99ff66" stroke="#000" stroke-width="3.9"/><rect x="1218.51" y="2457.59" width="14.10" height="65.14" fill="#99ff66" stroke="#000" stroke-width="3.9"/><rect x="1211.51" y="2463.81" width="28.10" height="43.15" fill="#99ff66" stroke="#000" stroke-width="3.9"/><rect x="1287.75" y="2524.80" width="14.10" height="79.25" fill="#99ff66" stroke="#000" stroke-width="3.9"/><rect x="1280.75" y="2525.63" width="28.10" height="66.38" fill="#99ff66" stroke="#000" stroke-width="3.9"/><rect x="1356.99" y="2436.84" width="14.10" height="170.11" fill="#99ff66" stroke="#000" stroke-width="3.9"/><rect x="1349.99" y="2505.72" width="28.10" height="90.03" fill="#99ff66" stroke="#000" stroke-width="3.9"/><rect x="1426.23" y="2382.49" width="14.10" height="58.09" fill="#99ff66" stroke="#000" stroke-width="3.9"/><rect x="1419.23" y="2403.65" width="28.10" height="24.48" fill="#99ff66" stroke="#000" stroke-width="3.9"/><rect x="1495.47" y="2502.40" width="14.10" height="97.92" fill="#99ff66" stroke="#000" stroke-width="3.9"/><rect x="1488.47" y="2521.07" width="28.10" height="47.30" fill="#99ff66" stroke="#000" stroke-width="3.9"/><rect x="1564.71" y="2543.89" width="14.10" height="63.89" fill="#99ff66" stroke="#000" stroke-width="3.9"/><rect x="1557.71" y="2561.73" width="28.10" height="34.02" fill="#99ff66" stroke="#000" stroke-width="3.9"/><rect x="1633.95" y="2380.00" width="14.10" height="204.55" fill="#99ff66" stroke="#000" stroke-width="3.9"/><rect x="1626.95" y="2415.68" width="28.10" height="129.45" fill="#99ff66" stroke="#000" stroke-width="3.9"/><rect x="1703.19" y="2383.74" width="14.10" height="90.03" fill="#99ff66" stroke="#000" stroke-width="3.9"/><rect x="1696.19" y="2415.68" width="28.10" height="43.15" fill="#99ff66" stroke="#000" stroke-width="3.9"/><rect x="1772.43" y="2444.31" width="14.10" height="95.43" fill="#99ff66" stroke="#000" stroke-width="3.9"/><rect x="1765.43" y="2465.06" width="28.10" height="49.37" fill="#99ff66" stroke="#000" stroke-width="3.9"/><rect x="1841.67" y="2461.32" width="14.10" height="133.60" fill="#99ff66" stroke="#000" stroke-width="3.9"/><rect x="1834.67" y="2485.80" width="28.10" height="96.26" fill="#99ff66" stroke="#000" stroke-width="3.9"/><rect x="1910.91" y="2396.18" width="14.10" height="229.02" fill="#99ff66" stroke="#000" stroke-width="3.9"/><rect x="1903.91" y="2475.84" width="28.10" height="123.64" fill="#99ff66" stroke="#000" stroke-width="3.9"/><rect x="1980.15" y="2403.65" width="14.10" height="56.43" fill="#99ff66" stroke="#000" stroke-width="3.9"/><rect x="1973.15" y="2425.64" width="28.10" height="34.44" fill="#99ff66" stroke="#000" stroke-width="3.9"/><rect x="2049.39" y="2439.75" width="14.10" height="65.97" fill="#99ff66" stroke="#000" stroke-width="3.9"/><rect x="2042.39" y="2456.34" width="28.10" height="40.66" fill="#99ff66" stroke="#000" stroke-width="3.9"/><rect x="2118.63" y="2415.68" width="14.10" height="112.85" fill="#99ff66" stroke="#000" stroke-width="3.9"/><rect x="2111.63" y="2434.35" width="28.10" height="63.89" fill="#99ff66" stroke="#000" stroke-width="3.9"/><rect x="2187.87" y="2376.27" width="14.10" height="193.76" fill="#99ff66" stroke="#000" stroke-width="3.9"/><rect x="2180.87" y="2397.43" width="28.10" height="148.95" fill="#99ff66" stroke="#000" stroke-width="3.9"/><rect x="2257.11" y="2402.82" width="14.10" height="57.26" fill="#99ff66" stroke="#000" stroke-width="3.9"/><rect x="2250.11" y="2414.02" width="28.10" height="16.60" fill="#99ff66" stroke="#000" stroke-width="3.9"/><rect x="2326.35" y="2438.09" width="14.10" height="62.65" fill="#99ff66" stroke="#000" stroke-width="3.9"/><rect x="2319.35" y="2450.95" width="28.10" height="36.10" fill="#99ff66" stroke="#000" stroke-width="3.9"/><rect x="2395.59" y="2365.07" width="14.10" height="130.69" fill="#99ff66" stroke="#000" stroke-width="3.9"/><rect x="2388.59" y="2392.45" width="28.10" height="73.02" fill="#99ff66" stroke="#000" stroke-width="3.9"/><rect x="2464.83" y="2326.89" width="14.10" height="209.11" fill="#99ff66" stroke="#000" stroke-width="3.9"/><rect x="2457.83" y="2351.79" width="28.10" height="80.08" fill="#99ff66" stroke="#000" stroke-width="3.9"/><rect x="2534.07" y="2380.00" width="14.10" height="68.04" fill="#99ff66" stroke="#000" stroke-width="3.9"/><rect x="2527.07" y="2397.43" width="28.10" height="33.19" fill="#99ff66" stroke="#000" stroke-width="3.9"/><rect x="2603.31" y="2394.52" width="14.10" height="97.92" fill="#99ff66" stroke="#000" stroke-width="3.9"/><rect x="2596.31" y="2434.35" width="28.10" height="31.12" fill="#99ff66" stroke="#000" stroke-width="3.9"/><rect x="2672.55" y="2321.50" width="14.10" height="138.58" fill="#99ff66" stroke="#000" stroke-width="3.9"/><rect x="2665.55" y="2351.79" width="28.10" height="61.41" fill="#99ff66" stroke="#000" stroke-width="3.9"/><rect x="2741.79" y="2293.70" width="14.10" height="152.68" fill="#99ff66" stroke="#000" stroke-width="3.9"/><rect x="2734.79" y="2321.50" width="28.10" height="60.99" fill="#99ff66" stroke="#000" stroke-width="3.9"/><rect x="2811.03" y="2347.22" width="14.10" height="94.60" fill="#99ff66" stroke="#000" stroke-width="3.9"/><rect x="2804.03" y="2380.83" width="28.10" height="44.81" fill="#99ff66" stroke="#000" stroke-width="3.9"/><rect x="2880.27" y="2371.29" width="14.10" height="83.81" fill="#99ff66" stroke="#000" stroke-width="3.9"/><rect x="2873.27" y="2392.45" width="28.10" height="53.94" fill="#99ff66" stroke="#000" stroke-width="3.9"/><rect x="2949.51" y="2276.69" width="14.10" height="111.19" fill="#99ff66" stroke="#000" stroke-width="3.9"/><rect x="2942.51" y="2321.50" width="28.10" height="52.69" fill="#99ff66" stroke="#000" stroke-width="3.9"/><rect x="3018.75" y="2236.45" width="14.10" height="127.79" fill="#99ff66" stroke="#000" stroke-width="3.9"/><rect x="3011.75" y="2289.97" width="28.10" height="50.62" fill="#99ff66" stroke="#000" stroke-width="3.9"/><rect x="3087.99" y="2322.33" width="14.10" height="79.66" fill="#99ff66" stroke="#000" stroke-width="3.9"/><rect x="3080.99" y="2347.22" width="28.10" height="41.49" fill="#99ff66" stroke="#000" stroke-width="3.9"/><rect x="3157.23" y="2365.07" width="14.10" height="82.15" fill="#99ff66" stroke="#000" stroke-width="3.9"/><rect x="3150.23" y="2382.49" width="28.10" height="32.36" fill="#99ff66" stroke="#000" stroke-width="3.9"/><rect x="3226.47" y="2261.76" width="14.10" height="126.13" fill="#99ff66" stroke="#000" stroke-width="3.9"/><rect x="3219.47" y="2293.70" width="28.10" height="39.00" fill="#99ff66" stroke="#000" stroke-width="3.9"/><rect x="3295.71" y="2253.04" width="14.10" height="107.46" fill="#99ff66" stroke="#000" stroke-width="3.9"/><rect x="3288.71" y="2263.00" width="28.10" height="51.86" fill="#99ff66" stroke="#000" stroke-width="3.9"/><rect x="3364.95" y="2308.64" width="14.10" height="95.84" fill="#99ff66" stroke="#000" stroke-width="3.9"/><rect x="3357.95" y="2320.67" width="28.10" height="44.39" fill="#99ff66" stroke="#000" stroke-width="3.9"/><rect x="3434.19" y="2336.44" width="14.10" height="98.75" fill="#99ff66" stroke="#000" stroke-width="3.9"/><rect x="3427.19" y="2357.60" width="28.10" height="63.06" fill="#99ff66" stroke="#000" stroke-width="3.9"/><rect x="3503.43" y="2261.76" width="14.10" height="135.67" fill="#99ff66" stroke="#000" stroke-width="3.9"/><rect x="3496.43" y="2287.48" width="28.10" height="69.29" fill="#99ff66" stroke="#000" stroke-width="3.9"/><rect x="3572.67" y="2247.65" width="14.10" height="147.70" fill="#99ff66" stroke="#000" stroke-width="3.9"/><rect x="3565.67" y="2252.21" width="28.10" height="68.46" fill="#99ff66" stroke="#000" stroke-width="3.9"/><rect x="3641.91" y="2314.03" width="14.10" height="104.14" fill="#99ff66" stroke="#000" stroke-width="3.9"/><rect x="3634.91" y="2332.70" width="28.10" height="27.80" fill="#99ff66" stroke="#000" stroke-width="3.9"/><rect x="3711.15" y="2329.38" width="14.10" height="146.46" fill="#99ff66" stroke="#000" stroke-width="3.9"/><rect x="3704.15" y="2362.16" width="28.10" height="65.97" fill="#99ff66" stroke="#000" stroke-width="3.9"/><rect x="3780.39" y="2238.52" width="14.10" height="254.75" fill="#99ff66" stroke="#000" stroke-width="3.9"/><rect x="3773.39" y="2272.96" width="28.10" height="103.31" fill="#99ff66" stroke="#000" stroke-width="3.9"/><rect x="3849.63" y="2228.56" width="14.10" height="257.24" fill="#99ff66" stroke="#000" stroke-width="3.9"/><rect x="3842.63" y="2247.65" width="28.10" height="79.25" fill="#99ff66" stroke="#000" stroke-width="3.9"/><rect x="3918.87" y="2304.90" width="14.10" height="103.31" fill="#99ff66" stroke="#000" stroke-width="3.9"/><rect x="3911.87" y="2338.10" width="28.10" height="49.79" fill="#99ff66" stroke="#000" stroke-width="3.9"/><rect x="3988.11" y="2350.96" width="14.10" height="136.92" fill="#99ff66" stroke="#000" stroke-width="3.9"/><rect x="3981.11" y="2373.36" width="28.10" height="55.60" fill="#99ff66" stroke="#000" stroke-width="3.9"/><rect x="4057.35" y="2243.91" width="14.10" height="290.02" fill="#99ff66" stroke="#000" stroke-width="3.9"/><rect x="4050.35" y="2258.02" width="28.10" height="144.80" fill="#99ff66" stroke="#000" stroke-width="3.9"/><rect x="4126.59" y="2229.39" width="14.10" height="271.34" fill="#99ff66" stroke="#000" stroke-width="3.9"/><rect x="4119.59" y="2252.21" width="28.10" height="108.29" fill="#99ff66" stroke="#000" stroke-width="3.9"/><rect x="4195.83" y="2323.58" width="14.10" height="125.30" fill="#99ff66" stroke="#000" stroke-width="3.9"/><rect x="4188.83" y="2344.32" width="28.10" height="53.11" fill="#99ff66" stroke="#000" stroke-width="3.9"/><rect x="4265.07" y="2338.10" width="14.10" height="167.62" fill="#99ff66" stroke="#000" stroke-width="3.9"/><rect x="4258.07" y="2362.16" width="28.10" height="84.22" fill="#99ff66" stroke="#000" stroke-width="3.9"/><rect x="4334.31" y="2236.45" width="14.10" height="316.15" fill="#99ff66" stroke="#000" stroke-width="3.9"/><rect x="4327.31" y="2273.37" width="28.10" height="176.75" fill="#99ff66" stroke="#000" stroke-width="3.9"/><rect x="4403.55" y="2250.55" width="14.10" height="335.24" fill="#99ff66" stroke="#000" stroke-width="3.9"/><rect x="4396.55" y="2264.24" width="28.10" height="189.61" fill="#99ff66" stroke="#000" stroke-width="3.9"/><polyline points="256.20,2343.91 325.44,2443.48 394.68,2477.50 463.92,2497.00 533.16,2438.09 602.40,2450.95 671.64,2472.11 740.88,2439.75 810.12,2367.55 879.36,2435.18 948.60,2433.11 1017.84,2340.17 1087.08,2340.59 1156.32,2399.09 1225.56,2458.42 1294.80,2522.73 1364.04,2430.62 1433.28,2426.89 1502.52,2508.21 1571.76,2564.63 1641.00,2380.83 1710.24,2415.68 1779.48,2469.21 1848.72,2482.07 1917.96,2478.75 1987.20,2468.79 2056.44,2495.76 2125.68,2487.88 2194.92,2543.06 2264.16,2424.81 2333.40,2520.24 2402.64,2495.34 2471.88,2552.60 2541.12,2470.04 2610.36,2508.21 2679.60,2456.34 2748.84,2445.14 2818.08,2426.89 2887.32,2454.68 2956.56,2375.02 3025.80,2316.11 3095.04,2360.50 3164.28,2394.52 3233.52,2292.04 3302.76,2270.47 3372.00,2320.67 3441.24,2336.44 3510.48,2301.17 3579.72,2251.38 3648.96,2336.44 3718.20,2376.27 3787.44,2376.27 3856.68,2312.37 3925.92,2367.55 3995.16,2365.90 4064.40,2389.96 4133.64,2317.77 4202.88,2445.14 4272.12,2434.35 4341.36,2533.93 4410.60,2511.94" fill="none" stroke="#ff0000" stroke-width="6.3" stroke-linejoin="round" stroke-linecap="butt"/><polyline points="256.20,2343.91 325.44,2443.48 394.68,2484.14 463.92,2501.98 533.16,2443.48 602.40,2451.78 671.64,2460.08 740.88,2445.56 810.12,2350.96 879.36,2418.17 948.60,2433.11 1017.84,2407.39 1087.08,2432.28 1156.32,2406.56 1225.56,2485.80 1294.80,2560.90 1364.04,2540.15 1433.28,2414.02 1502.52,2547.62 1571.76,2572.93 1641.00,2485.80 1710.24,2436.01 1779.48,2495.34 1848.72,2532.27 1917.96,2524.80 1987.20,2445.14 2056.44,2476.67 2125.68,2472.11 2194.92,2468.79 2264.16,2430.62 2333.40,2465.06 2402.64,2426.89 2471.88,2401.16 2541.12,2414.85 2610.36,2447.22 2679.60,2389.96 2748.84,2367.55 2818.08,2397.43 2887.32,2421.49 2956.56,2345.57 3025.80,2310.30 3095.04,2360.50 3164.28,2399.09 3233.52,2319.84 3302.76,2294.95 3372.00,2344.32 3441.24,2387.88 3510.48,2328.14 3579.72,2307.39 3648.96,2345.57 3718.20,2397.43 3787.44,2345.57 3856.68,2306.98 3925.92,2358.43 3995.16,2404.48 4064.40,2343.91 4133.64,2327.31 4202.88,2380.00 4272.12,2410.29 4341.36,2367.55 4410.60,2365.07" fill="none" stroke="#0000ff" stroke-width="6.3" stroke-linejoin="round" stroke-linecap="butt"/><path d="M242.15 2343.91H270.25M311.39 2443.48H339.49M380.63 2482.07H408.73M449.87 2501.57H477.97M519.11 2438.09H547.21M588.35 2451.78H616.45M657.59 2462.15H685.69M726.83 2441.82H754.93M796.07 2343.08H824.17M865.31 2421.49H893.41M934.55 2428.13H962.65M1003.79 2399.09H1031.89M1073.03 2402.82H1101.13M1142.27 2399.09H1170.37M1211.51 2483.31H1239.61M1280.75 2566.29H1308.85M1349.99 2557.16H1378.09M1419.23 2414.85H1447.33M1488.47 2543.06H1516.57M1557.71 2574.59H1585.81M1626.95 2490.78H1655.05M1696.19 2436.84H1724.29M1765.43 2493.27H1793.53M1834.67 2552.60H1862.77M1903.91 2533.93H1932.01M1973.15 2441.82H2001.25M2042.39 2476.67H2070.49M2111.63 2471.28H2139.73M2180.87 2465.06H2208.97M2250.11 2428.55H2278.21M2319.35 2461.32H2347.45M2388.59 2421.49H2416.69M2457.83 2391.20H2485.93M2527.07 2409.46H2555.17M2596.31 2456.34H2624.41M2665.55 2389.96H2693.65M2734.79 2346.81H2762.89M2804.03 2396.18H2832.13M2873.27 2426.89H2901.37M2942.51 2346.81H2970.61M3011.75 2314.03H3039.85M3080.99 2362.16H3109.09M3150.23 2398.26H3178.33M3219.47 2306.15H3247.57M3288.71 2280.01H3316.81M3357.95 2337.27H3386.05M3427.19 2387.88H3455.29M3496.43 2313.62H3524.53M3565.67 2294.95H3593.77M3634.91 2344.32H3663.01M3704.15 2388.71H3732.25M3773.39 2334.36H3801.49M3842.63 2272.96H3870.73M3911.87 2365.90H3939.97M3981.11 2391.20H4009.21M4050.35 2314.86H4078.45M4119.59 2304.90H4147.69M4188.83 2362.16H4216.93M4258.07 2394.52H4286.17M4327.31 2337.27H4355.41M4396.55 2314.86H4424.65" stroke="#000" stroke-width="3.9" fill="none"/></g>
<rect x="221.45" y="2047.4" width="4224.05" height="624.10" fill="none" stroke="#000" stroke-width="6.7"/>
<path d="M256.50 2671.50v28.9M533.46 2671.50v28.9M810.42 2671.50v28.9M1087.38 2671.50v28.9M1364.34 2671.50v28.9M1641.30 2671.50v28.9M1918.26 2671.50v28.9M2195.22 2671.50v28.9M2472.18 2671.50v28.9M2749.14 2671.50v28.9M3026.10 2671.50v28.9M3303.06 2671.50v28.9M3580.02 2671.50v28.9M3856.98 2671.50v28.9M4133.94 2671.50v28.9M4410.90 2671.50v28.9M221.45 2470.45h-25.2M221.45 2263.00h-25.2M221.45 2055.55h-25.2" stroke="#000" stroke-width="6.5" fill="none"/>
<text transform="translate(136.87,2492.45) scale(0.939,1)" font-size="61.81">5</text>
<text transform="translate(99.51,2285.00) scale(0.950,1)" font-size="61.81">1</text><text transform="translate(136.13,2285.00) scale(0.995,1)" font-size="61.81">0</text>
<text transform="translate(99.51,2077.55) scale(0.950,1)" font-size="61.81">1</text><text transform="translate(136.87,2077.55) scale(0.939,1)" font-size="61.81">5</text>
<text transform="translate(223.21,2022.20) scale(0.950,1)" font-size="70.64">1</text><text transform="translate(265.07,2022.20) scale(0.995,1)" font-size="70.64">0</text><text transform="translate(306.85,2022.20) scale(1.075,1)" font-size="70.64">m</text><text transform="translate(394.87,2022.20) scale(0.954,1)" font-size="70.64">w</text><text transform="translate(448.22,2022.20) scale(0.965,1)" font-size="70.64">i</text><text transform="translate(466.30,2022.20) scale(1.018,1)" font-size="70.64">n</text><text transform="translate(507.91,2022.20) scale(1.026,1)" font-size="70.64">d</text><text transform="translate(572.62,2022.20) scale(0.905,1)" font-size="70.64">s</text><text transform="translate(606.90,2022.20) scale(1.027,1)" font-size="70.64">p</text><text transform="translate(648.46,2022.20) scale(1.019,1)" font-size="70.64">e</text><text transform="translate(689.48,2022.20) scale(1.019,1)" font-size="70.64">e</text><text transform="translate(730.52,2022.20) scale(1.026,1)" font-size="70.64">d</text><text transform="translate(795.63,2022.20) scale(0.798,1)" font-size="70.64">(</text><text transform="translate(820.41,2022.20) scale(1.075,1)" font-size="70.64">m</text><text transform="translate(884.35,2022.20) scale(1.144,1)" font-size="70.64">/</text><text transform="translate(908.64,2022.20) scale(0.905,1)" font-size="70.64">s</text><text transform="translate(946.55,2022.20) scale(0.798,1)" font-size="70.64">)</text>
<clipPath id="c_temp"><rect x="221.45" y="2815.4" width="4224.05" height="624.0999999999999"/></clipPath>
<g clip-path="url(#c_temp)"><path d="M256.20 3439.50V2815.40M533.16 3439.50V2815.40M810.12 3439.50V2815.40M1087.08 3439.50V2815.40M1364.04 3439.50V2815.40M1641.00 3439.50V2815.40M1917.96 3439.50V2815.40M2194.92 3439.50V2815.40M2471.88 3439.50V2815.40M2748.84 3439.50V2815.40M3025.80 3439.50V2815.40M3302.76 3439.50V2815.40M3579.72 3439.50V2815.40M3856.68 3439.50V2815.40M4133.64 3439.50V2815.40M4410.60 3439.50V2815.40M221.45 3408.40H4445.50M221.45 3271.41H4445.50M221.45 3134.43H4445.50M221.45 2997.44H4445.50M221.45 2860.45H4445.50" stroke="#cfcfcf" stroke-width="3.9" stroke-dasharray="15.41 6.66" fill="none"/><path d="M325.44 3326.21V3319.36M394.68 3396.89V3391.96M463.92 3115.25V3082.37M533.16 2934.42V2911.14M602.40 3261.82V3238.54M671.64 3350.87V3315.25M740.88 2981.00V2896.07M810.12 2898.81V2857.71M879.36 3241.28V3205.66M948.60 3317.99V3276.89M1017.84 2928.94V2871.41M1087.08 2904.29V2846.75M1156.32 3249.49V3191.96M1225.56 3328.95V3281.00M1294.80 2994.70V2937.16M1364.04 2915.24V2863.19M1433.28 3257.71V3172.78M1502.52 3360.45V3308.40M1571.76 3038.53V2953.60M1641.00 2960.45V2876.89M1710.24 3242.65V3170.04M1779.48 3361.82V3323.47M1848.72 3093.33V2967.30M1917.96 2972.78V2893.33M1987.20 3289.22V3194.70M2056.44 3381.00V3290.59M2125.68 3115.25V2964.56M2194.92 3002.92V2890.59M2264.16 3302.92V3193.33M2333.40 3393.33V3305.66M2402.64 3139.90V2926.20M2471.88 3042.64V2882.37M2541.12 3302.92V3190.59M2610.36 3404.29V3287.85M2679.60 3181.00V2879.63M2748.84 3074.15V2841.27M2818.08 3331.69V3139.90M2887.32 3398.81V3259.08M2956.56 3159.08V2896.07M3025.80 3090.59V2846.75M3095.04 3326.21V3201.55M3164.28 3393.33V3302.92M3233.52 3181.00V3039.90M3302.76 3102.92V2889.22M3372.00 3328.95V3213.88M3441.24 3397.44V3274.15M3510.48 3190.59V3031.68M3579.72 3126.21V2874.15M3648.96 3316.62V3190.59M3718.20 3394.70V3271.41M3787.44 3230.32V2950.86M3856.68 3400.18V2852.23M3925.92 3364.56V3186.48M3995.16 3404.29V3301.55M4064.40 3193.33V2975.52M4133.64 3104.29V2865.93M4202.88 3313.88V3181.00M4272.12 3412.51V3300.18M4341.36 3137.16V2939.90M4410.60 3126.21V2874.15" stroke="#000" stroke-width="3.9" fill="none"/><path d="M249.15 2995.52H263.25" stroke="#000" stroke-width="3.9" stroke-linecap="square"/><path d="M242.15 2995.52H270.25" stroke="#000" stroke-width="3.9" stroke-linecap="square"/><rect x="318.39" y="3321.28" width="14.10" height="3.56" fill="#99ff66" stroke="#000" stroke-width="3.9"/><rect x="311.39" y="3322.37" width="28.10" height="1.64" fill="#99ff66" stroke="#000" stroke-width="3.9"/><rect x="387.63" y="3393.33" width="14.10" height="2.74" fill="#99ff66" stroke="#000" stroke-width="3.9"/><rect x="380.63" y="3394.15" width="28.10" height="1.10" fill="#99ff66" stroke="#000" stroke-width="3.9"/><rect x="456.87" y="3090.59" width="14.10" height="16.44" fill="#99ff66" stroke="#000" stroke-width="3.9"/><rect x="449.87" y="3096.07" width="28.10" height="5.48" fill="#99ff66" stroke="#000" stroke-width="3.9"/><rect x="526.11" y="2915.24" width="14.10" height="15.07" fill="#99ff66" stroke="#000" stroke-width="3.9"/><rect x="519.11" y="2919.35" width="28.10" height="6.85" fill="#99ff66" stroke="#000" stroke-width="3.9"/><rect x="595.35" y="3244.02" width="14.10" height="13.70" fill="#99ff66" stroke="#000" stroke-width="3.9"/><rect x="588.35" y="3248.12" width="28.10" height="6.85" fill="#99ff66" stroke="#000" stroke-width="3.9"/><rect x="664.59" y="3328.95" width="14.10" height="16.44" fill="#99ff66" stroke="#000" stroke-width="3.9"/><rect x="657.59" y="3333.06" width="28.10" height="8.22" fill="#99ff66" stroke="#000" stroke-width="3.9"/><rect x="733.83" y="2917.98" width="14.10" height="54.80" fill="#99ff66" stroke="#000" stroke-width="3.9"/><rect x="726.83" y="2928.94" width="28.10" height="24.66" fill="#99ff66" stroke="#000" stroke-width="3.9"/><rect x="803.07" y="2868.67" width="14.10" height="21.92" fill="#99ff66" stroke="#000" stroke-width="3.9"/><rect x="796.07" y="2871.41" width="28.10" height="13.70" fill="#99ff66" stroke="#000" stroke-width="3.9"/><rect x="872.31" y="3208.40" width="14.10" height="24.66" fill="#99ff66" stroke="#000" stroke-width="3.9"/><rect x="865.31" y="3213.88" width="28.10" height="10.96" fill="#99ff66" stroke="#000" stroke-width="3.9"/><rect x="941.55" y="3287.85" width="14.10" height="24.66" fill="#99ff66" stroke="#000" stroke-width="3.9"/><rect x="934.55" y="3290.59" width="28.10" height="16.44" fill="#99ff66" stroke="#000" stroke-width="3.9"/><rect x="1010.79" y="2881.00" width="14.10" height="31.51" fill="#99ff66" stroke="#000" stroke-width="3.9"/><rect x="1003.79" y="2887.85" width="28.10" height="16.44" fill="#99ff66" stroke="#000" stroke-width="3.9"/><rect x="1080.03" y="2857.71" width="14.10" height="35.62" fill="#99ff66" stroke="#000" stroke-width="3.9"/><rect x="1073.03" y="2861.82" width="28.10" height="15.07" fill="#99ff66" stroke="#000" stroke-width="3.9"/><rect x="1149.27" y="3205.66" width="14.10" height="27.40" fill="#99ff66" stroke="#000" stroke-width="3.9"/><rect x="1142.27" y="3209.77" width="28.10" height="15.07" fill="#99ff66" stroke="#000" stroke-width="3.9"/><rect x="1218.51" y="3294.70" width="14.10" height="26.03" fill="#99ff66" stroke="#000" stroke-width="3.9"/><rect x="1211.51" y="3296.07" width="28.10" height="13.70" fill="#99ff66" stroke="#000" stroke-width="3.9"/><rect x="1287.75" y="2939.90" width="14.10" height="43.84" fill="#99ff66" stroke="#000" stroke-width="3.9"/><rect x="1280.75" y="2946.75" width="28.10" height="23.29" fill="#99ff66" stroke="#000" stroke-width="3.9"/><rect x="1356.99" y="2871.41" width="14.10" height="30.14" fill="#99ff66" stroke="#000" stroke-width="3.9"/><rect x="1349.99" y="2879.63" width="28.10" height="19.18" fill="#99ff66" stroke="#000" stroke-width="3.9"/><rect x="1426.23" y="3191.96" width="14.10" height="65.75" fill="#99ff66" stroke="#000" stroke-width="3.9"/><rect x="1419.23" y="3202.92" width="28.10" height="38.36" fill="#99ff66" stroke="#000" stroke-width="3.9"/><rect x="1495.47" y="3313.88" width="14.10" height="42.47" fill="#99ff66" stroke="#000" stroke-width="3.9"/><rect x="1488.47" y="3328.95" width="28.10" height="17.81" fill="#99ff66" stroke="#000" stroke-width="3.9"/><rect x="1564.71" y="2986.48" width="14.10" height="49.32" fill="#99ff66" stroke="#000" stroke-width="3.9"/><rect x="1557.71" y="2998.81" width="28.10" height="27.40" fill="#99ff66" stroke="#000" stroke-width="3.9"/><rect x="1633.95" y="2898.81" width="14.10" height="38.36" fill="#99ff66" stroke="#000" stroke-width="3.9"/><rect x="1626.95" y="2904.29" width="28.10" height="19.18" fill="#99ff66" stroke="#000" stroke-width="3.9"/><rect x="1703.19" y="3194.70" width="14.10" height="38.36" fill="#99ff66" stroke="#000" stroke-width="3.9"/><rect x="1696.19" y="3201.55" width="28.10" height="19.18" fill="#99ff66" stroke="#000" stroke-width="3.9"/><rect x="1772.43" y="3333.06" width="14.10" height="23.29" fill="#99ff66" stroke="#000" stroke-width="3.9"/><rect x="1765.43" y="3337.17" width="28.10" height="15.07" fill="#99ff66" stroke="#000" stroke-width="3.9"/><rect x="1841.67" y="3016.62" width="14.10" height="52.06" fill="#99ff66" stroke="#000" stroke-width="3.9"/><rect x="1834.67" y="3030.31" width="28.10" height="28.77" fill="#99ff66" stroke="#000" stroke-width="3.9"/><rect x="1910.91" y="2909.77" width="14.10" height="35.62" fill="#99ff66" stroke="#000" stroke-width="3.9"/><rect x="1903.91" y="2920.72" width="28.10" height="21.92" fill="#99ff66" stroke="#000" stroke-width="3.9"/><rect x="1980.15" y="3219.36" width="14.10" height="49.32" fill="#99ff66" stroke="#000" stroke-width="3.9"/><rect x="1973.15" y="3233.06" width="28.10" height="24.66" fill="#99ff66" stroke="#000" stroke-width="3.9"/><rect x="2049.39" y="3337.17" width="14.10" height="41.10" fill="#99ff66" stroke="#000" stroke-width="3.9"/><rect x="2042.39" y="3350.87" width="28.10" height="21.92" fill="#99ff66" stroke="#000" stroke-width="3.9"/><rect x="2118.63" y="3005.66" width="14.10" height="91.78" fill="#99ff66" stroke="#000" stroke-width="3.9"/><rect x="2111.63" y="3046.75" width="28.10" height="41.10" fill="#99ff66" stroke="#000" stroke-width="3.9"/><rect x="2187.87" y="2902.92" width="14.10" height="46.58" fill="#99ff66" stroke="#000" stroke-width="3.9"/><rect x="2180.87" y="2923.46" width="28.10" height="26.03" fill="#99ff66" stroke="#000" stroke-width="3.9"/><rect x="2257.11" y="3213.88" width="14.10" height="75.34" fill="#99ff66" stroke="#000" stroke-width="3.9"/><rect x="2250.11" y="3231.69" width="28.10" height="49.32" fill="#99ff66" stroke="#000" stroke-width="3.9"/><rect x="2326.35" y="3334.43" width="14.10" height="54.80" fill="#99ff66" stroke="#000" stroke-width="3.9"/><rect x="2319.35" y="3353.61" width="28.10" height="28.77" fill="#99ff66" stroke="#000" stroke-width="3.9"/><rect x="2395.59" y="2982.37" width="14.10" height="135.62" fill="#99ff66" stroke="#000" stroke-width="3.9"/><rect x="2388.59" y="3037.16" width="28.10" height="78.08" fill="#99ff66" stroke="#000" stroke-width="3.9"/><rect x="2464.83" y="2894.70" width="14.10" height="115.07" fill="#99ff66" stroke="#000" stroke-width="3.9"/><rect x="2457.83" y="2928.94" width="28.10" height="63.01" fill="#99ff66" stroke="#000" stroke-width="3.9"/><rect x="2534.07" y="3233.06" width="14.10" height="63.01" fill="#99ff66" stroke="#000" stroke-width="3.9"/><rect x="2527.07" y="3253.60" width="28.10" height="41.10" fill="#99ff66" stroke="#000" stroke-width="3.9"/><rect x="2603.31" y="3365.93" width="14.10" height="28.77" fill="#99ff66" stroke="#000" stroke-width="3.9"/><rect x="2596.31" y="3365.93" width="28.10" height="16.44" fill="#99ff66" stroke="#000" stroke-width="3.9"/><rect x="2672.55" y="3011.14" width="14.10" height="123.29" fill="#99ff66" stroke="#000" stroke-width="3.9"/><rect x="2665.55" y="3049.49" width="28.10" height="68.49" fill="#99ff66" stroke="#000" stroke-width="3.9"/><rect x="2741.79" y="2934.42" width="14.10" height="98.63" fill="#99ff66" stroke="#000" stroke-width="3.9"/><rect x="2734.79" y="2950.86" width="28.10" height="71.23" fill="#99ff66" stroke="#000" stroke-width="3.9"/><rect x="2811.03" y="3235.80" width="14.10" height="78.08" fill="#99ff66" stroke="#000" stroke-width="3.9"/><rect x="2804.03" y="3275.52" width="28.10" height="23.29" fill="#99ff66" stroke="#000" stroke-width="3.9"/><rect x="2880.27" y="3348.13" width="14.10" height="39.73" fill="#99ff66" stroke="#000" stroke-width="3.9"/><rect x="2873.27" y="3365.93" width="28.10" height="17.81" fill="#99ff66" stroke="#000" stroke-width="3.9"/><rect x="2949.51" y="3048.12" width="14.10" height="95.89" fill="#99ff66" stroke="#000" stroke-width="3.9"/><rect x="2942.51" y="3075.52" width="28.10" height="50.69" fill="#99ff66" stroke="#000" stroke-width="3.9"/><rect x="3018.75" y="2961.82" width="14.10" height="113.70" fill="#99ff66" stroke="#000" stroke-width="3.9"/><rect x="3011.75" y="2997.44" width="28.10" height="54.80" fill="#99ff66" stroke="#000" stroke-width="3.9"/><rect x="3087.99" y="3271.41" width="14.10" height="43.84" fill="#99ff66" stroke="#000" stroke-width="3.9"/><rect x="3080.99" y="3289.22" width="28.10" height="15.07" fill="#99ff66" stroke="#000" stroke-width="3.9"/><rect x="3157.23" y="3338.54" width="14.10" height="46.58" fill="#99ff66" stroke="#000" stroke-width="3.9"/><rect x="3150.23" y="3356.34" width="28.10" height="17.81" fill="#99ff66" stroke="#000" stroke-width="3.9"/><rect x="3226.47" y="3070.04" width="14.10" height="67.12" fill="#99ff66" stroke="#000" stroke-width="3.9"/><rect x="3219.47" y="3081.00" width="28.10" height="43.84" fill="#99ff66" stroke="#000" stroke-width="3.9"/><rect x="3295.71" y="2991.96" width="14.10" height="78.08" fill="#99ff66" stroke="#000" stroke-width="3.9"/><rect x="3288.71" y="3011.14" width="28.10" height="49.32" fill="#99ff66" stroke="#000" stroke-width="3.9"/><rect x="3364.95" y="3272.78" width="14.10" height="41.10" fill="#99ff66" stroke="#000" stroke-width="3.9"/><rect x="3357.95" y="3287.85" width="28.10" height="19.18" fill="#99ff66" stroke="#000" stroke-width="3.9"/><rect x="3434.19" y="3353.61" width="14.10" height="21.92" fill="#99ff66" stroke="#000" stroke-width="3.9"/><rect x="3427.19" y="3354.97" width="28.10" height="12.33" fill="#99ff66" stroke="#000" stroke-width="3.9"/><rect x="3503.43" y="3059.08" width="14.10" height="86.30" fill="#99ff66" stroke="#000" stroke-width="3.9"/><rect x="3496.43" y="3078.26" width="28.10" height="46.58" fill="#99ff66" stroke="#000" stroke-width="3.9"/><rect x="3572.67" y="2981.00" width="14.10" height="100.00" fill="#99ff66" stroke="#000" stroke-width="3.9"/><rect x="3565.67" y="2998.81" width="28.10" height="52.06" fill="#99ff66" stroke="#000" stroke-width="3.9"/><rect x="3641.91" y="3259.08" width="14.10" height="43.84" fill="#99ff66" stroke="#000" stroke-width="3.9"/><rect x="3634.91" y="3276.89" width="28.10" height="19.18" fill="#99ff66" stroke="#000" stroke-width="3.9"/><rect x="3711.15" y="3339.91" width="14.10" height="41.10" fill="#99ff66" stroke="#000" stroke-width="3.9"/><rect x="3704.15" y="3348.13" width="28.10" height="24.66" fill="#99ff66" stroke="#000" stroke-width="3.9"/><rect x="3780.39" y="3031.68" width="14.10" height="113.70" fill="#99ff66" stroke="#000" stroke-width="3.9"/><rect x="3773.39" y="3065.93" width="28.10" height="43.84" fill="#99ff66" stroke="#000" stroke-width="3.9"/><rect x="3849.63" y="2944.01" width="14.10" height="127.40" fill="#99ff66" stroke="#000" stroke-width="3.9"/><rect x="3842.63" y="2975.52" width="28.10" height="73.97" fill="#99ff66" stroke="#000" stroke-width="3.9"/><rect x="3918.87" y="3265.93" width="14.10" height="45.21" fill="#99ff66" stroke="#000" stroke-width="3.9"/><rect x="3911.87" y="3275.52" width="28.10" height="24.66" fill="#99ff66" stroke="#000" stroke-width="3.9"/><rect x="3988.11" y="3331.69" width="14.10" height="52.06" fill="#99ff66" stroke="#000" stroke-width="3.9"/><rect x="3981.11" y="3352.24" width="28.10" height="15.07" fill="#99ff66" stroke="#000" stroke-width="3.9"/><rect x="4057.35" y="3024.84" width="14.10" height="110.96" fill="#99ff66" stroke="#000" stroke-width="3.9"/><rect x="4050.35" y="3045.38" width="28.10" height="64.38" fill="#99ff66" stroke="#000" stroke-width="3.9"/><rect x="4126.59" y="2912.51" width="14.10" height="154.80" fill="#99ff66" stroke="#000" stroke-width="3.9"/><rect x="4119.59" y="2970.04" width="28.10" height="72.60" fill="#99ff66" stroke="#000" stroke-width="3.9"/><rect x="4195.83" y="3250.86" width="14.10" height="58.90" fill="#99ff66" stroke="#000" stroke-width="3.9"/><rect x="4188.83" y="3271.41" width="28.10" height="32.88" fill="#99ff66" stroke="#000" stroke-width="3.9"/><rect x="4265.07" y="3328.95" width="14.10" height="53.43" fill="#99ff66" stroke="#000" stroke-width="3.9"/><rect x="4258.07" y="3342.65" width="28.10" height="27.40" fill="#99ff66" stroke="#000" stroke-width="3.9"/><rect x="4334.31" y="3011.14" width="14.10" height="120.55" fill="#99ff66" stroke="#000" stroke-width="3.9"/><rect x="4327.31" y="3044.01" width="28.10" height="76.71" fill="#99ff66" stroke="#000" stroke-width="3.9"/><rect x="4403.55" y="2887.85" width="14.10" height="172.60" fill="#99ff66" stroke="#000" stroke-width="3.9"/><rect x="4396.55" y="2942.64" width="28.10" height="90.41" fill="#99ff66" stroke="#000" stroke-width="3.9"/><polyline points="256.20,2995.52 325.44,3323.19 394.68,3394.70 463.92,3101.55 533.16,2926.20 602.40,3256.34 671.64,3334.43 740.88,2919.08 810.12,2876.89 879.36,3215.25 948.60,3293.33 1017.84,2904.29 1087.08,2886.48 1156.32,3224.84 1225.56,3320.73 1294.80,2931.68 1364.04,2879.63 1433.28,3261.82 1502.52,3350.87 1571.76,3045.38 1641.00,2890.59 1710.24,3208.40 1779.48,3346.76 1848.72,3046.75 1917.96,2946.75 1987.20,3252.23 2056.44,3370.04 2125.68,3117.99 2194.92,2959.08 2264.16,3259.08 2333.40,3354.97 2402.64,3075.52 2471.88,2928.94 2541.12,3249.49 2610.36,3360.45 2679.60,3071.41 2748.84,2937.16 2818.08,3271.41 2887.32,3375.52 2956.56,3067.30 3025.80,3000.18 3095.04,3287.85 3164.28,3361.82 3233.52,3135.79 3302.76,3078.26 3372.00,3301.55 3441.24,3352.24 3510.48,3111.14 3579.72,3048.12 3648.96,3290.59 3718.20,3353.61 3787.44,3063.19 3856.68,2979.63 3925.92,3279.63 3995.16,3354.97 4064.40,3031.68 4133.64,2853.60 4202.88,3254.97 4272.12,3359.08 4341.36,3011.14 4410.60,2885.11" fill="none" stroke="#ff0000" stroke-width="6.3" stroke-linejoin="round" stroke-linecap="butt"/><polyline points="256.20,2995.52 325.44,3323.19 394.68,3394.70 463.92,3098.81 533.16,2927.57 602.40,3252.23 671.64,3331.69 740.88,2942.64 810.12,2882.37 879.36,3220.73 948.60,3293.33 1017.84,2893.33 1087.08,2874.15 1156.32,3219.36 1225.56,3302.92 1294.80,2953.60 1364.04,2891.96 1433.28,3224.84 1502.52,3337.17 1571.76,3013.88 1641.00,2915.24 1710.24,3209.77 1779.48,3338.54 1848.72,3038.53 1917.96,2934.42 1987.20,3246.75 2056.44,3359.08 2125.68,3060.45 2194.92,2941.27 2264.16,3253.60 2333.40,3364.56 2402.64,3060.45 2471.88,2956.34 2541.12,3268.67 2610.36,3368.67 2679.60,3082.37 2748.84,2985.11 2818.08,3281.00 2887.32,3371.41 2956.56,3093.33 3025.80,3017.99 3095.04,3289.22 3164.28,3361.82 3233.52,3102.92 3302.76,3031.68 3372.00,3293.33 3441.24,3356.34 3510.48,3097.44 3579.72,3024.84 3648.96,3287.85 3718.20,3352.24 3787.44,3089.22 3856.68,3020.73 3925.92,3287.85 3995.16,3354.97 4064.40,3082.37 4133.64,2998.81 4202.88,3279.63 4272.12,3354.97 4341.36,3072.78 4410.60,2990.59" fill="none" stroke="#0000ff" stroke-width="6.3" stroke-linejoin="round" stroke-linecap="butt"/><path d="M242.15 2995.52H270.25M311.39 3323.19H339.49M380.63 3394.70H408.73M449.87 3098.81H477.97M519.11 2922.37H547.21M588.35 3251.41H616.45M657.59 3337.17H685.69M726.83 2942.64H754.93M796.07 2876.89H824.17M865.31 3219.36H893.41M934.55 3296.07H962.65M1003.79 2894.70H1031.89M1073.03 2868.67H1101.13M1142.27 3219.36H1170.37M1211.51 3302.92H1239.61M1280.75 2953.60H1308.85M1349.99 2886.48H1378.09M1419.23 3224.84H1447.33M1488.47 3338.54H1516.57M1557.71 3019.36H1585.81M1626.95 2913.88H1655.05M1696.19 3209.77H1724.29M1765.43 3345.39H1793.53M1834.67 3041.27H1862.77M1903.91 2933.05H1932.01M1973.15 3245.38H2001.25M2042.39 3367.30H2070.49M2111.63 3070.04H2139.73M2180.87 2938.53H2208.97M2250.11 3261.82H2278.21M2319.35 3368.67H2347.45M2388.59 3065.93H2416.69M2457.83 2952.23H2485.93M2527.07 3279.63H2555.17M2596.31 3374.15H2624.41M2665.55 3098.81H2693.65M2734.79 2998.81H2762.89M2804.03 3289.22H2832.13M2873.27 3375.52H2901.37M2942.51 3109.77H2970.61M3011.75 3030.31H3039.85M3080.99 3296.07H3109.09M3150.23 3370.04H3178.33M3219.47 3102.92H3247.57M3288.71 3045.38H3316.81M3357.95 3296.07H3386.05M3427.19 3359.08H3455.29M3496.43 3102.92H3524.53M3565.67 3028.94H3593.77M3634.91 3287.85H3663.01M3704.15 3360.45H3732.25M3773.39 3087.85H3801.49M3842.63 3017.99H3870.73M3911.87 3296.07H3939.97M3981.11 3361.82H4009.21M4050.35 3086.48H4078.45M4119.59 2991.96H4147.69M4188.83 3285.11H4216.93M4258.07 3360.45H4286.17M4327.31 3078.26H4355.41M4396.55 3013.88H4424.65" stroke="#000" stroke-width="3.9" fill="none"/></g>
<rect x="221.45" y="2815.4" width="4224.05" height="624.10" fill="none" stroke="#000" stroke-width="6.7"/>
<path d="M256.50 3439.50v24.7M533.46 3439.50v24.7M810.42 3439.50v24.7M1087.38 3439.50v24.7M1364.34 3439.50v24.7M1641.30 3439.50v24.7M1918.26 3439.50v24.7M2195.22 3439.50v24.7M2472.18 3439.50v24.7M2749.14 3439.50v24.7M3026.10 3439.50v24.7M3303.06 3439.50v24.7M3580.02 3439.50v24.7M3856.98 3439.50v24.7M4133.94 3439.50v24.7M4410.90 3439.50v24.7M221.45 3408.40h-25.2M221.45 3271.41h-25.2M221.45 3134.43h-25.2M221.45 2997.44h-25.2M221.45 2860.45h-25.2" stroke="#000" stroke-width="6.5" fill="none"/>
<text transform="translate(98.87,3430.40) scale(0.959,1)" font-size="61.81">2</text><text transform="translate(136.87,3430.40) scale(0.939,1)" font-size="61.81">5</text>
<text transform="translate(99.77,3293.41) scale(0.955,1)" font-size="61.81">3</text><text transform="translate(136.13,3293.41) scale(0.995,1)" font-size="61.81">0</text>
<text transform="translate(99.77,3156.43) scale(0.955,1)" font-size="61.81">3</text><text transform="translate(136.87,3156.43) scale(0.939,1)" font-size="61.81">5</text>
<text transform="translate(99.01,3019.44) scale(0.995,1)" font-size="61.81">4</text><text transform="translate(136.13,3019.44) scale(0.995,1)" font-size="61.81">0</text>
<text transform="translate(99.01,2882.45) scale(0.995,1)" font-size="61.81">4</text><text transform="translate(136.87,2882.45) scale(0.939,1)" font-size="61.81">5</text>
<text transform="translate(222.48,2790.40) scale(0.959,1)" font-size="70.64">2</text><text transform="translate(264.43,2790.40) scale(1.075,1)" font-size="70.64">m</text><text transform="translate(350.00,2790.40) scale(1.261,1)" font-size="70.64">t</text><text transform="translate(376.31,2790.40) scale(1.019,1)" font-size="70.64">e</text><text transform="translate(417.72,2790.40) scale(1.075,1)" font-size="70.64">m</text><text transform="translate(483.04,2790.40) scale(1.027,1)" font-size="70.64">p</text><text transform="translate(524.60,2790.40) scale(1.019,1)" font-size="70.64">e</text><text transform="translate(565.38,2790.40) scale(1.209,1)" font-size="70.64">r</text><text transform="translate(593.86,2790.40) scale(0.849,1)" font-size="70.64">a</text><text transform="translate(633.70,2790.40) scale(1.261,1)" font-size="70.64">t</text><text transform="translate(660.40,2790.40) scale(1.018,1)" font-size="70.64">u</text><text transform="translate(702.04,2790.40) scale(1.209,1)" font-size="70.64">r</text><text transform="translate(728.22,2790.40) scale(1.019,1)" font-size="70.64">e</text><text transform="translate(792.05,2790.40) scale(0.798,1)" font-size="70.64">(</text><text transform="translate(817.76,2790.40) scale(1.044,1)" font-size="70.64">°</text><text transform="translate(843.68,2790.40) scale(0.876,1)" font-size="70.64">C</text><text transform="translate(895.70,2790.40) scale(0.798,1)" font-size="70.64">)</text>
<text transform="translate(199.94,3534.30) scale(0.950,1)" font-size="61.81">1</text><text transform="translate(236.41,3534.30) scale(0.959,1)" font-size="61.81">2</text><text transform="translate(272.84,3534.30) scale(1.025,1)" font-size="61.81">Z</text>
<text transform="translate(168.83,3599.40) scale(0.959,1)" font-size="61.81">2</text><text transform="translate(205.34,3599.40) scale(1.028,1)" font-size="61.81">9</text><text transform="translate(242.10,3599.40) scale(0.951,1)" font-size="61.81">A</text><text transform="translate(282.87,3599.40) scale(1.027,1)" font-size="61.81">p</text><text transform="translate(319.02,3599.40) scale(1.209,1)" font-size="61.81">r</text>
<text transform="translate(476.90,3534.30) scale(0.950,1)" font-size="61.81">1</text><text transform="translate(513.37,3534.30) scale(0.959,1)" font-size="61.81">2</text><text transform="translate(549.80,3534.30) scale(1.025,1)" font-size="61.81">Z</text>
<text transform="translate(446.69,3599.40) scale(0.955,1)" font-size="61.81">3</text><text transform="translate(483.05,3599.40) scale(0.995,1)" font-size="61.81">0</text><text transform="translate(519.06,3599.40) scale(0.951,1)" font-size="61.81">A</text><text transform="translate(559.83,3599.40) scale(1.027,1)" font-size="61.81">p</text><text transform="translate(595.98,3599.40) scale(1.209,1)" font-size="61.81">r</text>
<text transform="translate(753.86,3534.30) scale(0.950,1)" font-size="61.81">1</text><text transform="translate(790.33,3534.30) scale(0.959,1)" font-size="61.81">2</text><text transform="translate(826.76,3534.30) scale(1.025,1)" font-size="61.81">Z</text>
<text transform="translate(713.06,3599.40) scale(0.995,1)" font-size="61.81">0</text><text transform="translate(750.66,3599.40) scale(0.950,1)" font-size="61.81">1</text><text transform="translate(786.79,3599.40) scale(0.941,1)" font-size="61.81">M</text><text transform="translate(837.44,3599.40) scale(0.849,1)" font-size="61.81">a</text><text transform="translate(873.49,3599.40) scale(1.013,1)" font-size="61.81">y</text>
<text transform="translate(1030.82,3534.30) scale(0.950,1)" font-size="61.81">1</text><text transform="translate(1067.29,3534.30) scale(0.959,1)" font-size="61.81">2</text><text transform="translate(1103.72,3534.30) scale(1.025,1)" font-size="61.81">Z</text>
<text transform="translate(990.02,3599.40) scale(0.995,1)" font-size="61.81">0</text><text transform="translate(1026.98,3599.40) scale(0.959,1)" font-size="61.81">2</text><text transform="translate(1063.75,3599.40) scale(0.941,1)" font-size="61.81">M</text><text transform="translate(1114.40,3599.40) scale(0.849,1)" font-size="61.81">a</text><text transform="translate(1150.45,3599.40) scale(1.013,1)" font-size="61.81">y</text>
<text transform="translate(1307.78,3534.30) scale(0.950,1)" font-size="61.81">1</text><text transform="translate(1344.25,3534.30) scale(0.959,1)" font-size="61.81">2</text><text transform="translate(1380.68,3534.30) scale(1.025,1)" font-size="61.81">Z</text>
<text transform="translate(1266.98,3599.40) scale(0.995,1)" font-size="61.81">0</text><text transform="translate(1304.84,3599.40) scale(0.955,1)" font-size="61.81">3</text><text transform="translate(1340.71,3599.40) scale(0.941,1)" font-size="61.81">M</text><text transform="translate(1391.36,3599.40) scale(0.849,1)" font-size="61.81">a</text><text transform="translate(1427.41,3599.40) scale(1.013,1)" font-size="61.81">y</text>
<text transform="translate(1584.74,3534.30) scale(0.950,1)" font-size="61.81">1</text><text transform="translate(1621.21,3534.30) scale(0.959,1)" font-size="61.81">2</text><text transform="translate(1657.64,3534.30) scale(1.025,1)" font-size="61.81">Z</text>
<text transform="translate(1543.94,3599.40) scale(0.995,1)" font-size="61.81">0</text><text transform="translate(1581.04,3599.40) scale(0.995,1)" font-size="61.81">4</text><text transform="translate(1617.67,3599.40) scale(0.941,1)" font-size="61.81">M</text><text transform="translate(1668.32,3599.40) scale(0.849,1)" font-size="61.81">a</text><text transform="translate(1704.37,3599.40) scale(1.013,1)" font-size="61.81">y</text>
<text transform="translate(1861.70,3534.30) scale(0.950,1)" font-size="61.81">1</text><text transform="translate(1898.17,3534.30) scale(0.959,1)" font-size="61.81">2</text><text transform="translate(1934.60,3534.30) scale(1.025,1)" font-size="61.81">Z</text>
<text transform="translate(1820.90,3599.40) scale(0.995,1)" font-size="61.81">0</text><text transform="translate(1858.74,3599.40) scale(0.939,1)" font-size="61.81">5</text><text transform="translate(1894.63,3599.40) scale(0.941,1)" font-size="61.81">M</text><text transform="translate(1945.28,3599.40) scale(0.849,1)" font-size="61.81">a</text><text transform="translate(1981.33,3599.40) scale(1.013,1)" font-size="61.81">y</text>
<text transform="translate(2138.66,3534.30) scale(0.950,1)" font-size="61.81">1</text><text transform="translate(2175.13,3534.30) scale(0.959,1)" font-size="61.81">2</text><text transform="translate(2211.56,3534.30) scale(1.025,1)" font-size="61.81">Z</text>
<text transform="translate(2097.86,3599.40) scale(0.995,1)" font-size="61.81">0</text><text transform="translate(2134.37,3599.40) scale(1.030,1)" font-size="61.81">6</text><text transform="translate(2171.59,3599.40) scale(0.941,1)" font-size="61.81">M</text><text transform="translate(2222.24,3599.40) scale(0.849,1)" font-size="61.81">a</text><text transform="translate(2258.29,3599.40) scale(1.013,1)" font-size="61.81">y</text>
<text transform="translate(2415.62,3534.30) scale(0.950,1)" font-size="61.81">1</text><text transform="translate(2452.09,3534.30) scale(0.959,1)" font-size="61.81">2</text><text transform="translate(2488.52,3534.30) scale(1.025,1)" font-size="61.81">Z</text>
<text transform="translate(2374.82,3599.40) scale(0.995,1)" font-size="61.81">0</text><text transform="translate(2412.19,3599.40) scale(0.973,1)" font-size="61.81">7</text><text transform="translate(2448.55,3599.40) scale(0.941,1)" font-size="61.81">M</text><text transform="translate(2499.20,3599.40) scale(0.849,1)" font-size="61.81">a</text><text transform="translate(2535.25,3599.40) scale(1.013,1)" font-size="61.81">y</text>
<text transform="translate(2692.58,3534.30) scale(0.950,1)" font-size="61.81">1</text><text transform="translate(2729.05,3534.30) scale(0.959,1)" font-size="61.81">2</text><text transform="translate(2765.48,3534.30) scale(1.025,1)" font-size="61.81">Z</text>
<text transform="translate(2651.78,3599.40) scale(0.995,1)" font-size="61.81">0</text><text transform="translate(2688.70,3599.40) scale(1.006,1)" font-size="61.81">8</text><text transform="translate(2725.51,3599.40) scale(0.941,1)" font-size="61.81">M</text><text transform="translate(2776.16,3599.40) scale(0.849,1)" font-size="61.81">a</text><text transform="translate(2812.21,3599.40) scale(1.013,1)" font-size="61.81">y</text>
<text transform="translate(2969.54,3534.30) scale(0.950,1)" font-size="61.81">1</text><text transform="translate(3006.01,3534.30) scale(0.959,1)" font-size="61.81">2</text><text transform="translate(3042.44,3534.30) scale(1.025,1)" font-size="61.81">Z</text>
<text transform="translate(2928.74,3599.40) scale(0.995,1)" font-size="61.81">0</text><text transform="translate(2965.10,3599.40) scale(1.028,1)" font-size="61.81">9</text><text transform="translate(3002.47,3599.40) scale(0.941,1)" font-size="61.81">M</text><text transform="translate(3053.12,3599.40) scale(0.849,1)" font-size="61.81">a</text><text transform="translate(3089.17,3599.40) scale(1.013,1)" font-size="61.81">y</text>
<text transform="translate(3246.50,3534.30) scale(0.950,1)" font-size="61.81">1</text><text transform="translate(3282.97,3534.30) scale(0.959,1)" font-size="61.81">2</text><text transform="translate(3319.40,3534.30) scale(1.025,1)" font-size="61.81">Z</text>
<text transform="translate(3206.19,3599.40) scale(0.950,1)" font-size="61.81">1</text><text transform="translate(3242.81,3599.40) scale(0.995,1)" font-size="61.81">0</text><text transform="translate(3279.43,3599.40) scale(0.941,1)" font-size="61.81">M</text><text transform="translate(3330.08,3599.40) scale(0.849,1)" font-size="61.81">a</text><text transform="translate(3366.13,3599.40) scale(1.013,1)" font-size="61.81">y</text>
<text transform="translate(3523.46,3534.30) scale(0.950,1)" font-size="61.81">1</text><text transform="translate(3559.93,3534.30) scale(0.959,1)" font-size="61.81">2</text><text transform="translate(3596.36,3534.30) scale(1.025,1)" font-size="61.81">Z</text>
<text transform="translate(3483.15,3599.40) scale(0.950,1)" font-size="61.81">1</text><text transform="translate(3520.26,3599.40) scale(0.950,1)" font-size="61.81">1</text><text transform="translate(3556.39,3599.40) scale(0.941,1)" font-size="61.81">M</text><text transform="translate(3607.04,3599.40) scale(0.849,1)" font-size="61.81">a</text><text transform="translate(3643.09,3599.40) scale(1.013,1)" font-size="61.81">y</text>
<text transform="translate(3800.42,3534.30) scale(0.950,1)" font-size="61.81">1</text><text transform="translate(3836.89,3534.30) scale(0.959,1)" font-size="61.81">2</text><text transform="translate(3873.32,3534.30) scale(1.025,1)" font-size="61.81">Z</text>
<text transform="translate(3760.11,3599.40) scale(0.950,1)" font-size="61.81">1</text><text transform="translate(3796.58,3599.40) scale(0.959,1)" font-size="61.81">2</text><text transform="translate(3833.35,3599.40) scale(0.941,1)" font-size="61.81">M</text><text transform="translate(3884.00,3599.40) scale(0.849,1)" font-size="61.81">a</text><text transform="translate(3920.05,3599.40) scale(1.013,1)" font-size="61.81">y</text>
<text transform="translate(4077.38,3534.30) scale(0.950,1)" font-size="61.81">1</text><text transform="translate(4113.85,3534.30) scale(0.959,1)" font-size="61.81">2</text><text transform="translate(4150.28,3534.30) scale(1.025,1)" font-size="61.81">Z</text>
<text transform="translate(4037.07,3599.40) scale(0.950,1)" font-size="61.81">1</text><text transform="translate(4074.44,3599.40) scale(0.955,1)" font-size="61.81">3</text><text transform="translate(4110.31,3599.40) scale(0.941,1)" font-size="61.81">M</text><text transform="translate(4160.96,3599.40) scale(0.849,1)" font-size="61.81">a</text><text transform="translate(4197.01,3599.40) scale(1.013,1)" font-size="61.81">y</text>
<text transform="translate(4354.34,3534.30) scale(0.950,1)" font-size="61.81">1</text><text transform="translate(4390.81,3534.30) scale(0.959,1)" font-size="61.81">2</text><text transform="translate(4427.24,3534.30) scale(1.025,1)" font-size="61.81">Z</text>
<text transform="translate(4314.03,3599.40) scale(0.950,1)" font-size="61.81">1</text><text transform="translate(4350.64,3599.40) scale(0.995,1)" font-size="61.81">4</text><text transform="translate(4387.27,3599.40) scale(0.941,1)" font-size="61.81">M</text><text transform="translate(4437.92,3599.40) scale(0.849,1)" font-size="61.81">a</text><text transform="translate(4473.97,3599.40) scale(1.013,1)" font-size="61.81">y</text>
<text transform="translate(220.90,123.80) scale(0.876,1)" font-size="88.42">C</text><text transform="translate(279.78,123.80) scale(0.941,1)" font-size="88.42">M</text><text transform="translate(350.91,123.80) scale(0.951,1)" font-size="88.42">A</text><text transform="translate(405.75,123.80) scale(1.017,1)" font-size="88.42">-</text><text transform="translate(439.43,123.80) scale(0.920,1)" font-size="88.42">G</text><text transform="translate(505.76,123.80) scale(0.818,1)" font-size="88.42">E</text><text transform="translate(558.37,123.80) scale(0.835,1)" font-size="88.42">P</text><text transform="translate(608.68,123.80) scale(0.841,1)" font-size="88.42">S</text><text transform="translate(687.32,123.80) scale(1.075,1)" font-size="88.42">m</text><text transform="translate(768.12,123.80) scale(1.019,1)" font-size="88.42">e</text><text transform="translate(819.24,123.80) scale(1.261,1)" font-size="88.42">t</text><text transform="translate(852.18,123.80) scale(1.019,1)" font-size="88.42">e</text><text transform="translate(903.62,123.80) scale(1.003,1)" font-size="88.42">o</text><text transform="translate(954.60,123.80) scale(1.026,1)" font-size="88.42">g</text><text transform="translate(1007.25,123.80) scale(1.209,1)" font-size="88.42">r</text><text transform="translate(1042.91,123.80) scale(0.849,1)" font-size="88.42">a</text><text transform="translate(1093.48,123.80) scale(1.075,1)" font-size="88.42">m</text>
<text transform="translate(221.53,237.00) scale(0.939,1)" font-size="88.42">H</text><text transform="translate(285.17,237.00) scale(1.013,1)" font-size="88.42">y</text><text transform="translate(333.08,237.00) scale(1.026,1)" font-size="88.42">d</text><text transform="translate(386.03,237.00) scale(1.019,1)" font-size="88.42">e</text><text transform="translate(437.08,237.00) scale(1.209,1)" font-size="88.42">r</text><text transform="translate(472.73,237.00) scale(0.849,1)" font-size="88.42">a</text><text transform="translate(523.77,237.00) scale(1.027,1)" font-size="88.42">b</text><text transform="translate(576.84,237.00) scale(0.849,1)" font-size="88.42">a</text><text transform="translate(626.95,237.00) scale(1.026,1)" font-size="88.42">d</text><text transform="translate(707.50,237.00) scale(0.959,1)" font-size="88.42">2</text><text transform="translate(761.86,237.00) scale(0.939,1)" font-size="88.42">5</text><text transform="translate(812.52,237.00) scale(1.021,1)" font-size="88.42">.</text><text transform="translate(841.50,237.00) scale(0.955,1)" font-size="88.42">3</text><text transform="translate(893.26,237.00) scale(1.006,1)" font-size="88.42">8</text><text transform="translate(947.01,237.00) scale(1.042,1)" font-size="88.42">°</text><text transform="translate(987.70,237.00) scale(0.932,1)" font-size="88.42">N</text><text transform="translate(1076.43,237.00) scale(1.030,1)" font-size="88.42">6</text><text transform="translate(1130.12,237.00) scale(1.006,1)" font-size="88.42">8</text><text transform="translate(1182.09,237.00) scale(1.021,1)" font-size="88.42">.</text><text transform="translate(1210.00,237.00) scale(0.995,1)" font-size="88.42">4</text><text transform="translate(1262.88,237.00) scale(0.959,1)" font-size="88.42">2</text><text transform="translate(1316.58,237.00) scale(1.042,1)" font-size="88.42">°</text><text transform="translate(1358.11,237.00) scale(0.818,1)" font-size="88.42">E</text>
<text transform="translate(220.20,349.60) scale(0.998,1)" font-size="88.42">I</text><text transform="translate(246.37,349.60) scale(1.018,1)" font-size="88.42">n</text><text transform="translate(299.81,349.60) scale(0.965,1)" font-size="88.42">i</text><text transform="translate(321.39,349.60) scale(1.261,1)" font-size="88.42">t</text><text transform="translate(355.71,349.60) scale(0.965,1)" font-size="88.42">i</text><text transform="translate(378.01,349.60) scale(1.075,1)" font-size="88.42">m</text><text transform="translate(458.81,349.60) scale(1.019,1)" font-size="88.42">e</text><text transform="translate(510.91,349.60) scale(1.021,1)" font-size="88.42">:</text><text transform="translate(565.86,349.60) scale(0.959,1)" font-size="88.42">2</text><text transform="translate(619.17,349.60) scale(0.995,1)" font-size="88.42">0</text><text transform="translate(672.05,349.60) scale(0.959,1)" font-size="88.42">2</text><text transform="translate(724.50,349.60) scale(1.030,1)" font-size="88.42">6</text><text transform="translate(778.45,349.60) scale(0.995,1)" font-size="88.42">0</text><text transform="translate(831.54,349.60) scale(0.995,1)" font-size="88.42">4</text><text transform="translate(884.42,349.60) scale(0.959,1)" font-size="88.42">2</text><text transform="translate(936.67,349.60) scale(1.028,1)" font-size="88.42">9</text><text transform="translate(1018.06,349.60) scale(0.950,1)" font-size="88.42">1</text><text transform="translate(1070.23,349.60) scale(0.959,1)" font-size="88.42">2</text><text transform="translate(1122.40,349.60) scale(0.928,1)" font-size="88.42">U</text><text transform="translate(1180.27,349.60) scale(1.029,1)" font-size="88.42">T</text><text transform="translate(1229.39,349.60) scale(0.876,1)" font-size="88.42">C</text>
<path d="M2957.3 84.2V458.6" stroke="#000" stroke-width="4.5"/>
<rect x="2933.6" y="147.7" width="47.8" height="247.2" fill="#99ff66" stroke="#000" stroke-width="4.8"/>
<rect x="2909.8" y="209.5" width="95.3" height="123.5" fill="#99ff66" stroke="#000" stroke-width="4.8"/>
<path d="M2909.8 270.8H3005.1" stroke="#000" stroke-width="4.8"/>
<text transform="translate(3053.36,99.10) scale(1.075,1)" font-size="52.98">m</text><text transform="translate(3102.40,99.10) scale(0.849,1)" font-size="52.98">a</text><text transform="translate(3132.76,99.10) scale(1.047,1)" font-size="52.98">x</text>
<text transform="translate(3053.20,160.88) scale(1.028,1)" font-size="52.98">9</text><text transform="translate(3085.65,160.88) scale(0.995,1)" font-size="52.98">0</text><text transform="translate(3117.15,160.88) scale(0.969,1)" font-size="52.98">%</text>
<text transform="translate(3054.06,222.66) scale(0.973,1)" font-size="52.98">7</text><text transform="translate(3086.28,222.66) scale(0.939,1)" font-size="52.98">5</text><text transform="translate(3117.15,222.66) scale(0.969,1)" font-size="52.98">%</text>
<text transform="translate(3053.36,284.44) scale(1.075,1)" font-size="52.98">m</text><text transform="translate(3101.77,284.44) scale(1.019,1)" font-size="52.98">e</text><text transform="translate(3132.54,284.44) scale(1.026,1)" font-size="52.98">d</text><text transform="translate(3165.10,284.44) scale(0.965,1)" font-size="52.98">i</text><text transform="translate(3178.79,284.44) scale(0.849,1)" font-size="52.98">a</text><text transform="translate(3209.30,284.44) scale(1.018,1)" font-size="52.98">n</text>
<text transform="translate(3053.71,346.22) scale(0.959,1)" font-size="52.98">2</text><text transform="translate(3086.28,346.22) scale(0.939,1)" font-size="52.98">5</text><text transform="translate(3117.15,346.22) scale(0.969,1)" font-size="52.98">%</text>
<text transform="translate(3054.26,408.00) scale(0.950,1)" font-size="52.98">1</text><text transform="translate(3085.65,408.00) scale(0.995,1)" font-size="52.98">0</text><text transform="translate(3117.15,408.00) scale(0.969,1)" font-size="52.98">%</text>
<text transform="translate(3053.36,469.78) scale(1.075,1)" font-size="52.98">m</text><text transform="translate(3102.60,469.78) scale(0.965,1)" font-size="52.98">i</text><text transform="translate(3116.16,469.78) scale(1.018,1)" font-size="52.98">n</text>
<path d="M3667 206.2H3807" stroke="#ff0000" stroke-width="6.8"/>
<path d="M3667 339.1H3807" stroke="#0000ff" stroke-width="6.8"/>
<text transform="translate(3857.10,229.20) scale(0.876,1)" font-size="70.64">C</text><text transform="translate(3903.75,229.20) scale(1.003,1)" font-size="70.64">o</text><text transform="translate(3945.12,229.20) scale(1.018,1)" font-size="70.64">n</text><text transform="translate(3986.54,229.20) scale(1.261,1)" font-size="70.64">t</text><text transform="translate(4012.62,229.20) scale(1.209,1)" font-size="70.64">r</text><text transform="translate(4038.88,229.20) scale(1.003,1)" font-size="70.64">o</text><text transform="translate(4080.66,229.20) scale(0.965,1)" font-size="70.64">l</text>
<text transform="translate(3858.30,362.40) scale(0.818,1)" font-size="70.64">E</text><text transform="translate(3899.91,362.40) scale(1.018,1)" font-size="70.64">n</text><text transform="translate(3942.71,362.40) scale(0.905,1)" font-size="70.64">s</text><text transform="translate(3976.23,362.40) scale(1.019,1)" font-size="70.64">e</text><text transform="translate(4017.64,362.40) scale(1.075,1)" font-size="70.64">m</text><text transform="translate(4082.96,362.40) scale(1.027,1)" font-size="70.64">b</text><text transform="translate(4125.59,362.40) scale(0.965,1)" font-size="70.64">l</text><text transform="translate(4143.04,362.40) scale(1.019,1)" font-size="70.64">e</text><text transform="translate(4205.72,362.40) scale(0.941,1)" font-size="70.64">M</text><text transform="translate(4262.77,362.40) scale(1.019,1)" font-size="70.64">e</text><text transform="translate(4304.63,362.40) scale(0.849,1)" font-size="70.64">a</text><text transform="translate(4345.31,362.40) scale(1.018,1)" font-size="70.64">n</text>
</g></svg>
</body></html>
